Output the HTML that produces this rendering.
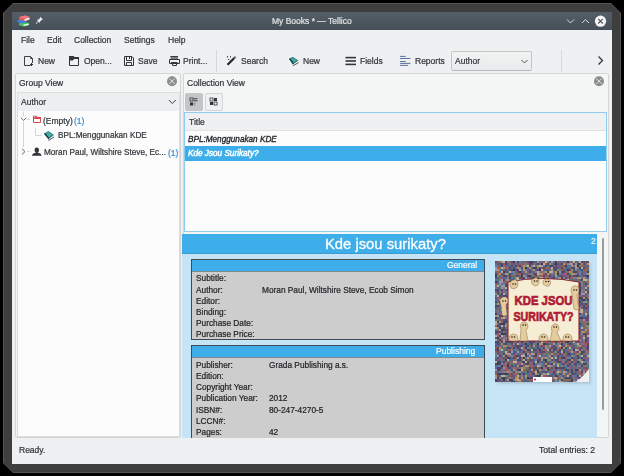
<!DOCTYPE html>
<html><head><meta charset="utf-8">
<style>
*{margin:0;padding:0;box-sizing:border-box}
html,body{width:624px;height:476px;overflow:hidden;background:#000;font-family:"Liberation Sans",sans-serif;font-size:8.5px;color:#31363b}
.a{position:absolute}
.t{position:absolute;line-height:10px;white-space:nowrap;-webkit-text-stroke:0.22px currentColor;will-change:transform}
#frame{left:3px;top:3px;width:618px;height:470px;background:#555;clip-path:polygon(10px 0,608px 0,618px 10px,618px 460px,608px 470px,10px 470px,0 460px,0 10px)}
#frame2{left:4px;top:4px;width:616px;height:468px;background:#3e3e3e;clip-path:polygon(9px 0,607px 0,616px 9px,616px 459px,607px 468px,9px 468px,0 459px,0 9px)}
#win{left:12px;top:12px;width:600px;height:452px;background:#eff0f1}
#title{left:12px;top:12px;width:600px;height:18px;background:linear-gradient(#555f68,#464f57)}
.panel{background:#f4f5f5;border:1px solid #d3d5d7;border-radius:2px}
.closeb{width:10px;height:10px;border-radius:50%;background:#8f9192}
</style></head><body>
<div class="a" id="frame"></div><div class="a" id="frame2"></div>
<div class="a" id="win"></div>
<div class="a" id="title"></div>
<div class="t" style="left:272px;top:16px;color:#dfe1e2">My Books * — Tellico</div>


<svg class="a" style="left:0;top:0" width="624" height="30">
 <!-- tellico books -->
 <path d="M19 23.2 L24.5 21.8 L29 23 L29 25.3 L24 26.4 L19 25.2 Z" fill="#43c25a"/>
 <path d="M23.5 24.6 L28.8 23.5 L28.8 25 L23.5 26.1 Z" fill="#f0f6f0"/>
 <path d="M17.6 20.2 L22.5 18.8 L26.5 20 L26.5 22.4 L22 23.3 L17.6 22.2 Z" fill="#3a82e0"/>
 <path d="M19 17 L25 15.4 L29.6 17 L29.6 19.8 L24.5 21.2 L19 19.6 Z" fill="#e55a5e"/>
 <path d="M19 17 L25 15.4 L29.6 17 L24.2 18.5 Z" fill="#ee7a7c"/>
 <path d="M24.6 19 L29.4 17.6 L29.4 19.5 L24.6 20.9 Z" fill="#f6eeee"/>
 <!-- pin -->
 <g transform="translate(39.3 20.5) rotate(45) scale(0.78)" fill="#eceeef">
  <rect x="-0.5" y="1.5" width="1" height="4.5"/>
  <path d="M-2.6 1.8 H2.6 L1.6 0 V-3 L2.4 -4.2 H-2.4 L-1.6 -3 V0 Z"/>
 </g>
 <!-- min max close -->
 <g stroke="#d8dadb" stroke-width="1" fill="none">
  <path d="M567 19.5 L570.5 23 L574 19.5"/>
  <path d="M582 23 L585.5 19.5 L589 23"/>
 </g>
 <circle cx="600.5" cy="21.2" r="5.6" fill="#f4f5f5"/>
 <path d="M598.2 18.9 L602.8 23.5 M602.8 18.9 L598.2 23.5" stroke="#4b535a" stroke-width="1.1"/>
</svg>

<!-- menu -->
<div class="t" style="left:21px;top:35px">File</div>
<div class="t" style="left:46.5px;top:35px">Edit</div>
<div class="t" style="left:73.5px;top:35px">Collection</div>
<div class="t" style="left:124px;top:35px">Settings</div>
<div class="t" style="left:168px;top:35px">Help</div>

<!-- toolbar -->
<div class="t" style="left:38px;top:56px">New</div>
<div class="t" style="left:83.5px;top:56px">Open...</div>
<div class="t" style="left:138px;top:56px">Save</div>
<div class="t" style="left:183px;top:56px">Print...</div>
<div class="a" style="left:216px;top:50px;width:1px;height:22px;background:#d6d8da"></div>
<div class="t" style="left:240.6px;top:56px">Search</div>
<div class="t" style="left:303px;top:56px">New</div>
<div class="t" style="left:360px;top:56px">Fields</div>
<div class="t" style="left:414.7px;top:56px">Reports</div>
<div class="a" style="left:451px;top:51px;width:81px;height:20px;border:1px solid #c3c5c7;border-bottom-color:#b8babc;border-radius:2px;background:linear-gradient(#f1f2f2,#eaebec)"></div>
<div class="t" style="left:455px;top:56px">Author</div>
<div class="a" style="left:561px;top:50px;width:1px;height:22px;background:#d6d8da"></div>


<!-- toolbar icons -->
<svg class="a" style="left:0;top:0" width="624" height="80">
 <g fill="none" stroke="#31363b" stroke-width="1">
  <!-- new doc -->
  <path d="M30.5 65.5 H24.5 V56.5 H30.5 L32.5 58.5 V63" stroke="#3b4045"/>
  <path d="M30.3 56.3 L32.9 58.9 H30.3 Z" fill="#31363b" stroke="none"/>
  <!-- folder -->
  <path d="M69.5 59.5 V65.5 H78.5 V58.5"/>
  <!-- floppy -->
  <path d="M124.5 56.5 H132 L133.5 58 V65.5 H124.5 Z"/>
  <path d="M126.5 56.5 V60.5 H131.5 V56.5"/>
  <path d="M126.5 65.5 V62.5 H131.5 V65.5"/>
  <!-- printer -->
  <path d="M169.5 59.5 H179.5 V63.5 H169.5 Z"/>
  <path d="M172.5 63.5 V65.5 H176.5 V63.5"/>
 </g>
 <g fill="#31363b">
  <rect x="31" y="63" width="1" height="3"/><rect x="30" y="64" width="3" height="1"/>
  <path d="M69 56 H73.6 L74.6 57 H79 V59 H74.2 L72.8 60.4 H69 Z"/>
  <rect x="129" y="57" width="1" height="2"/>
  <rect x="170.5" y="56" width="7.5" height="3" fill="#7b7f83"/><rect x="170.5" y="56" width="7.5" height="0.9"/>
  <rect x="171" y="62" width="6.5" height="1.6"/>
  <!-- fields -->
  <rect x="345.5" y="56.8" width="10.5" height="1.6"/>
  <rect x="345.5" y="60.2" width="10.5" height="1.6"/>
  <rect x="345.5" y="63.6" width="10.5" height="1.6"/>
 </g>
 <!-- wand -->
 <path d="M228.3 64 L233.6 58.7" stroke="#232629" stroke-width="2.2" stroke-linecap="square"/>
 <path d="M233.8 58.5 L235.6 56.7" stroke="#6a6e72" stroke-width="2.2"/>
 <g fill="#45494d"><rect x="227" y="56" width="1" height="1.5"/><rect x="230" y="56" width="1" height="1.5"/><rect x="228" y="59" width="1.4" height="1"/></g>
 <!-- teal book -->
 <path d="M292.6 56.8 L298.5 60.5 L293.5 64.3 L289 59 Z" fill="#2a8580"/>
 <path d="M292 57.8 L296.5 60.3 L292.8 62.8 L290.5 59.2 Z" fill="#4aa8a2"/>
 <path d="M289 58.8 L290.3 58.2 L294 63.6 L293 64.8 Z" fill="#0f3f40"/>
 <path d="M293.7 64 L298.4 61 L298.4 62.5 L293.7 65.4 Z" fill="#f2f2f2"/>
 <path d="M293.2 65.6 L298.6 62.6" stroke="#2a2e32" stroke-width="0.8"/>
 <!-- reports -->
 <g stroke="#4a6090" stroke-width="0.9" stroke-linecap="round">
  <path d="M400.5 56.4 H405.3"/><path d="M400.5 58.5 H410"/><path d="M400.5 61.5 H405.3"/><path d="M400.5 63.4 H410"/><path d="M400.5 65.4 H407.8"/>
 </g>
 <g stroke="#31363b" stroke-width="1" fill="none">
  <!-- combo chevron -->
  <path d="M521.5 60 L524.5 63 L527.5 60" stroke="#4d5257"/>
  <!-- > -->
  <path d="M598.5 56.5 L602.5 60.5 L598.5 64.5" stroke-width="1.3"/>
 </g>
</svg>

<!-- group panel -->
<div class="a panel" style="left:15px;top:73px;width:166px;height:365px"></div>
<div class="t" style="left:18.5px;top:77.7px">Group View</div>
<svg class="a" style="left:166px;top:75px" width="12" height="12"><circle cx="6" cy="6.2" r="5" fill="#8c8d8e"/><path d="M3.4 3.6 L8.6 8.8 M8.6 3.6 L3.4 8.8" stroke="#eceded" stroke-width="0.9"/></svg>
<div class="a" style="left:17px;top:92px;width:163px;height:19px;background:#edeeef;border:1px solid #dcdddd;border-bottom:none"></div>
<div class="t" style="left:21px;top:97px">Author</div>
<svg class="a" style="left:168px;top:98px" width="10" height="8"><path d="M0.8 2 L4.3 5.5 L7.8 2" stroke="#31363b" stroke-width="1" fill="none"/></svg>
<div class="a" style="left:17px;top:111px;width:163px;height:326px;background:#fcfcfc;border:1px solid #dadbdc;border-top:none"></div>
<div class="t" style="left:43px;top:115.5px">(Empty)</div><div class="t" style="left:73.8px;top:115.5px;color:#3d8fd2">(1)</div>
<div class="t" style="left:57.8px;top:130.5px;font-size:8.2px">BPL:Menggunakan KDE</div>
<div class="t" style="left:43.5px;top:147.5px;font-size:8.2px">Moran Paul, Wiltshire Steve, Ec...</div><div class="t" style="left:167.5px;top:147.5px;color:#3d8fd2">(1)</div>


<!-- tree icons -->
<svg class="a" style="left:0;top:100px" width="200" height="70">
 <g stroke="#d3d4d5" stroke-width="1" fill="none">
  <path d="M23.5 11.5 V16"/><path d="M23.5 22 V47"/>
  <path d="M27 19.5 H30"/>
  <path d="M27 51.5 H30"/>
  <path d="M35.5 28 V35.5 H42"/>
 </g>
 <g stroke="#5d6166" stroke-width="1" fill="none">
  <path d="M21 17.8 L23.6 20.5 L26.2 17.8"/>
  <path d="M22 48.8 L25 51.6 L22 54.4"/>
 </g>
 <!-- red folder -->
 <g fill="none" stroke="#da4453" stroke-width="1">
  <path d="M33.5 16.5 V22.5 H40.5 V17.5"/>
 </g>
 <path d="M33 15.8 H36.5 L37.3 17 H41 V19 H33 Z" fill="#da4453"/>
 <rect x="34" y="16.3" width="1.2" height="1" fill="#fcfcfc"/>
 <!-- book -->
 <path d="M48.3 31 L54 35 L48.8 39.3 L44 33.8 Z" fill="#2a8580"/>
 <path d="M48.2 31.8 L52.3 34.9 L48.5 37.8 L45.6 34 Z" fill="#4aa8a2"/>
 <path d="M44 33.6 L45.3 33 L49.4 38.3 L48.6 39.6 Z" fill="#0f3f40"/>
 <path d="M49 39 L53.9 35.4 L53.9 37 L49 40.4 Z" fill="#f2f2f2"/>
 <path d="M48.4 40.6 L54.1 37" stroke="#2a2e32" stroke-width="0.8"/>
 <!-- person -->
 <path d="M36.8 47.5 C35.2 47.5 34.6 48.8 34.6 50.2 C34.6 51.8 35.5 52.8 36.8 52.8 C38.1 52.8 39 51.8 39 50.2 C39 48.8 38.4 47.5 36.8 47.5 Z M32 55.8 C32 53.8 34 52.8 36.8 52.8 C39.6 52.8 41.6 53.8 41.6 55.8 Z" fill="#31363b"/>
</svg>


<!-- collection panel -->
<div class="a panel" style="left:183px;top:73px;width:426px;height:365px"></div>
<div class="t" style="left:186.5px;top:77.7px">Collection View</div>
<svg class="a" style="left:593px;top:75px" width="12" height="12"><circle cx="6" cy="6.2" r="5" fill="#8c8d8e"/><path d="M3.4 3.6 L8.6 8.8 M8.6 3.6 L3.4 8.8" stroke="#eceded" stroke-width="0.9"/></svg>
<div class="a" style="left:185px;top:93px;width:18px;height:18px;background:#c4c5c6;border-radius:2px"></div>
<div class="a" style="left:204.5px;top:92.5px;width:18px;height:18px;background:#eff0f1;border:1px solid #d3d5d7;border-radius:2px"></div>
<!-- view mode icons -->
<svg class="a" style="left:185px;top:93px" width="40" height="20">
 <g fill="#31363b">
  <rect x="5" y="5" width="3" height="3" fill="none" stroke="#31363b" stroke-width="0.8"/>
  <rect x="8.5" y="5.3" width="4" height="0.9"/><rect x="8.5" y="7.3" width="4" height="0.9"/>
  <rect x="5" y="9.5" width="3" height="3"/>
  <rect x="8.5" y="9.8" width="2" height="0.9" fill="#7a7d80"/><rect x="8.5" y="11.6" width="2" height="0.9" fill="#7a7d80"/>
  <rect x="25" y="5" width="3" height="3" fill="none" stroke="#31363b" stroke-width="0.8"/>
  <rect x="29" y="5" width="3" height="3"/>
  <rect x="25" y="9" width="3" height="3"/>
  <rect x="29" y="9" width="3" height="3" fill="none" stroke="#31363b" stroke-width="0.8"/>
 </g>
</svg>
<div class="a" style="left:184px;top:112px;width:423px;height:120px;background:#fcfcfc;border:1px solid #8fcdee"></div>
<div class="a" style="left:185px;top:113px;width:421px;height:18px;background:#eff0f1;border-bottom:1px solid #e1e2e3"></div>
<div class="t" style="left:188.5px;top:117px">Title</div>
<div class="a" style="left:185px;top:146px;width:421px;height:15px;background:#3daee9"></div>
<div class="t" style="left:187.5px;top:134.5px;font-style:italic;font-size:8.2px;color:#232629;-webkit-text-stroke:0.32px #232629">BPL:Menggunakan KDE</div>
<div class="t" style="left:187.5px;top:149px;font-style:italic;font-size:8.2px;color:#fff;-webkit-text-stroke:0.45px #fff">Kde Jsou Surikaty?</div>

<!-- detail view -->
<div class="a" style="left:182px;top:234px;width:415px;height:204px;background:#c5e5f7"></div>
<div class="a" style="left:182px;top:234px;width:415px;height:20px;background:#3daee9;border-bottom:1px solid #3a9cd2"></div>
<div class="t" style="left:324.5px;top:236px;font-size:14.8px;line-height:16px;color:#fcfcfc;-webkit-text-stroke:0.3px #fcfcfc">Kde jsou surikaty?</div>
<div class="t" style="left:590.5px;top:236px;font-size:8.8px;color:#fcfcfc;-webkit-text-stroke:0.1px #fcfcfc">2</div>


<!-- tables -->
<div class="a" style="left:191px;top:259px;width:294px;height:81px;background:#cdcdcd;border:1px solid #3e4b55"></div>
<div class="a" style="left:192px;top:260px;width:292px;height:12px;background:#3daee9;border-bottom:1px solid #7d8a92"></div>
<div class="t" style="left:446.5px;top:260px;color:#fcfcfc">General</div>
<div class="t" style="left:195.5px;top:273px;font-size:8.3px;color:#232629">Subtitle:</div>
<div class="t" style="left:195.5px;top:284.5px;font-size:8.3px;color:#232629">Author:</div>
<div class="t" style="left:262px;top:284.5px;font-size:8.3px;color:#232629">Moran Paul, Wiltshire Steve, Ecob Simon</div>
<div class="t" style="left:195.5px;top:295.5px;font-size:8.3px;color:#232629">Editor:</div>
<div class="t" style="left:195.5px;top:306.5px;font-size:8.3px;color:#232629">Binding:</div>
<div class="t" style="left:195.5px;top:317.5px;font-size:8.3px;color:#232629">Purchase Date:</div>
<div class="t" style="left:195.5px;top:328.5px;font-size:8.3px;color:#232629">Purchase Price:</div>

<div class="a" style="left:191px;top:345px;width:294px;height:93px;background:#cdcdcd;border:1px solid #3e4b55;border-bottom:none"></div>
<div class="a" style="left:192px;top:346px;width:292px;height:12px;background:#3daee9;border-bottom:1px solid #7d8a92"></div>
<div class="t" style="left:435.5px;top:346px;color:#fcfcfc">Publishing</div>
<div class="t" style="left:195.5px;top:359.5px;font-size:8.3px;color:#232629">Publisher:</div>
<div class="t" style="left:268.5px;top:359.5px;font-size:8.3px;color:#232629">Grada Publishing a.s.</div>
<div class="t" style="left:195.5px;top:370.5px;font-size:8.3px;color:#232629">Edition:</div>
<div class="t" style="left:195.5px;top:382px;font-size:8.3px;color:#232629">Copyright Year:</div>
<div class="t" style="left:195.5px;top:393px;font-size:8.3px;color:#232629">Publication Year:</div>
<div class="t" style="left:268.5px;top:393px;font-size:8.3px;color:#232629">2012</div>
<div class="t" style="left:195.5px;top:404.5px;font-size:8.3px;color:#232629">ISBN#:</div>
<div class="t" style="left:268.5px;top:404.5px;font-size:8.3px;color:#232629">80-247-4270-5</div>
<div class="t" style="left:195.5px;top:415.5px;font-size:8.3px;color:#232629">LCCN#:</div>
<div class="t" style="left:195.5px;top:426.5px;font-size:8.3px;color:#232629">Pages:</div>
<div class="t" style="left:268.5px;top:426.5px;font-size:8.3px;color:#232629">42</div>

<!-- cover -->
<div class="a" style="left:497px;top:263px;width:94px;height:121px;background:rgba(0,0,0,.12);filter:blur(1px)"></div>
<svg class="a" style="left:495px;top:261px" width="94" height="121" viewBox="0 0 94 121">
<defs><filter id="bl"><feGaussianBlur stdDeviation="0.6"/></filter></defs><rect width="94" height="121" fill="#6a6680"/>
<g shape-rendering="crispEdges" filter="url(#bl)"><path fill="#6a3f62" d="M0 0h2v2h-2zM16 0h2v2h-2zM32 0h2v2h-2zM90 0h2v2h-2zM92 0h2v2h-2zM36 2h2v2h-2zM60 4h2v2h-2zM26 6h2v2h-2zM60 6h2v2h-2zM10 8h2v2h-2zM20 8h2v2h-2zM42 8h2v2h-2zM74 8h2v2h-2zM22 10h2v2h-2zM6 12h2v2h-2zM38 12h2v2h-2zM50 12h2v2h-2zM22 14h2v2h-2zM40 14h2v2h-2zM48 14h2v2h-2zM64 14h2v2h-2zM66 14h2v2h-2zM78 14h2v2h-2zM26 16h2v2h-2zM70 16h2v2h-2zM8 18h2v2h-2zM56 18h2v2h-2zM64 18h2v2h-2zM42 20h2v2h-2zM10 22h2v2h-2zM40 22h2v2h-2zM14 24h2v2h-2zM16 24h2v2h-2zM68 24h2v2h-2zM58 26h2v2h-2zM60 26h2v2h-2zM84 26h2v2h-2zM2 28h2v2h-2zM36 28h2v2h-2zM58 28h2v2h-2zM76 28h2v2h-2zM90 28h2v2h-2zM42 30h2v2h-2zM32 32h2v2h-2zM48 32h2v2h-2zM68 32h2v2h-2zM74 32h2v2h-2zM46 34h2v2h-2zM64 34h2v2h-2zM80 36h2v2h-2zM30 38h2v2h-2zM4 40h2v2h-2zM28 40h2v2h-2zM44 40h2v2h-2zM82 40h2v2h-2zM10 42h2v2h-2zM40 44h2v2h-2zM58 44h2v2h-2zM44 46h2v2h-2zM70 46h2v2h-2zM88 46h2v2h-2zM42 50h2v2h-2zM8 52h2v2h-2zM30 52h2v2h-2zM46 52h2v2h-2zM28 54h2v2h-2zM82 54h2v2h-2zM28 56h2v2h-2zM40 56h2v2h-2zM82 56h2v2h-2zM92 56h2v2h-2zM8 58h2v2h-2zM16 58h2v2h-2zM20 58h2v2h-2zM92 58h2v2h-2zM30 60h2v2h-2zM44 60h2v2h-2zM74 60h2v2h-2zM14 62h2v2h-2zM32 64h2v2h-2zM10 68h2v2h-2zM12 68h2v2h-2zM14 68h2v2h-2zM4 70h2v2h-2zM36 70h2v2h-2zM64 70h2v2h-2zM84 70h2v2h-2zM22 72h2v2h-2zM90 72h2v2h-2zM36 74h2v2h-2zM78 74h2v2h-2zM90 74h2v2h-2zM84 76h2v2h-2zM92 76h2v2h-2zM52 78h2v2h-2zM60 78h2v2h-2zM78 78h2v2h-2zM82 78h2v2h-2zM22 80h2v2h-2zM36 80h2v2h-2zM82 80h2v2h-2zM90 80h2v2h-2zM10 82h2v2h-2zM16 82h2v2h-2zM20 82h2v2h-2zM92 82h2v2h-2zM20 84h2v2h-2zM24 84h2v2h-2zM46 84h2v2h-2zM68 84h2v2h-2zM56 86h2v2h-2zM86 86h2v2h-2zM0 88h2v2h-2zM40 88h2v2h-2zM68 88h2v2h-2zM84 88h2v2h-2zM2 90h2v2h-2zM46 90h2v2h-2zM56 90h2v2h-2zM82 90h2v2h-2zM18 92h2v2h-2zM64 92h2v2h-2zM24 94h2v2h-2zM38 94h2v2h-2zM88 94h2v2h-2zM2 96h2v2h-2zM8 96h2v2h-2zM34 98h2v2h-2zM36 98h2v2h-2zM42 98h2v2h-2zM44 98h2v2h-2zM56 98h2v2h-2zM62 98h2v2h-2zM52 102h2v2h-2zM68 102h2v2h-2zM6 106h2v2h-2zM38 106h2v2h-2zM56 106h2v2h-2zM64 106h2v2h-2zM90 106h2v2h-2zM38 108h2v2h-2zM36 110h2v2h-2zM16 112h2v2h-2zM58 112h2v2h-2zM76 112h2v2h-2zM2 114h2v2h-2zM54 114h2v2h-2zM62 114h2v2h-2zM24 116h2v2h-2zM2 118h2v2h-2zM28 120h2v2h-2zM56 120h2v2h-2z"/><path fill="#8c5a6a" d="M2 0h2v2h-2zM30 0h2v2h-2zM48 0h2v2h-2zM58 0h2v2h-2zM68 0h2v2h-2zM64 2h2v2h-2zM22 4h2v2h-2zM68 4h2v2h-2zM86 4h2v2h-2zM36 6h2v2h-2zM90 6h2v2h-2zM6 8h2v2h-2zM0 10h2v2h-2zM38 10h2v2h-2zM82 10h2v2h-2zM88 10h2v2h-2zM22 12h2v2h-2zM28 12h2v2h-2zM48 12h2v2h-2zM50 14h2v2h-2zM34 16h2v2h-2zM48 16h2v2h-2zM8 20h2v2h-2zM16 20h2v2h-2zM46 20h2v2h-2zM68 20h2v2h-2zM70 20h2v2h-2zM80 20h2v2h-2zM84 20h2v2h-2zM70 22h2v2h-2zM20 26h2v2h-2zM20 28h2v2h-2zM0 30h2v2h-2zM6 30h2v2h-2zM8 30h2v2h-2zM22 30h2v2h-2zM66 30h2v2h-2zM40 32h2v2h-2zM86 34h2v2h-2zM90 34h2v2h-2zM8 36h2v2h-2zM58 36h2v2h-2zM20 38h2v2h-2zM38 38h2v2h-2zM78 38h2v2h-2zM2 40h2v2h-2zM18 40h2v2h-2zM50 42h2v2h-2zM68 42h2v2h-2zM82 42h2v2h-2zM84 42h2v2h-2zM92 42h2v2h-2zM72 44h2v2h-2zM2 46h2v2h-2zM42 46h2v2h-2zM80 46h2v2h-2zM76 48h2v2h-2zM0 50h2v2h-2zM20 50h2v2h-2zM28 50h2v2h-2zM56 50h2v2h-2zM46 54h2v2h-2zM52 54h2v2h-2zM4 56h2v2h-2zM64 56h2v2h-2zM78 56h2v2h-2zM44 58h2v2h-2zM50 58h2v2h-2zM52 62h2v2h-2zM66 64h2v2h-2zM68 64h2v2h-2zM78 64h2v2h-2zM6 66h2v2h-2zM36 66h2v2h-2zM68 66h2v2h-2zM84 68h2v2h-2zM56 70h2v2h-2zM78 70h2v2h-2zM44 72h2v2h-2zM50 72h2v2h-2zM64 72h2v2h-2zM92 72h2v2h-2zM10 74h2v2h-2zM50 74h2v2h-2zM60 76h2v2h-2zM64 76h2v2h-2zM76 76h2v2h-2zM78 76h2v2h-2zM86 76h2v2h-2zM2 78h2v2h-2zM6 78h2v2h-2zM42 80h2v2h-2zM52 80h2v2h-2zM86 80h2v2h-2zM56 82h2v2h-2zM72 82h2v2h-2zM84 82h2v2h-2zM4 84h2v2h-2zM16 84h2v2h-2zM76 84h2v2h-2zM82 86h2v2h-2zM12 88h2v2h-2zM88 88h2v2h-2zM4 90h2v2h-2zM42 90h2v2h-2zM54 90h2v2h-2zM80 90h2v2h-2zM80 94h2v2h-2zM10 96h2v2h-2zM20 96h2v2h-2zM70 96h2v2h-2zM52 100h2v2h-2zM72 100h2v2h-2zM28 102h2v2h-2zM40 104h2v2h-2zM88 106h2v2h-2zM8 108h2v2h-2zM0 110h2v2h-2zM86 112h2v2h-2zM14 114h2v2h-2zM32 114h2v2h-2zM50 114h2v2h-2zM86 114h2v2h-2zM44 116h2v2h-2zM90 116h2v2h-2zM26 118h2v2h-2zM34 118h2v2h-2zM44 118h2v2h-2zM4 120h2v2h-2zM20 120h2v2h-2zM26 120h2v2h-2zM54 120h2v2h-2z"/><path fill="#946a4c" d="M4 0h2v2h-2zM14 0h2v2h-2zM28 0h2v2h-2zM62 0h2v2h-2zM76 0h2v2h-2zM82 0h2v2h-2zM14 2h2v2h-2zM26 4h2v2h-2zM66 4h2v2h-2zM88 4h2v2h-2zM2 6h2v2h-2zM4 6h2v2h-2zM64 6h2v2h-2zM74 6h2v2h-2zM92 6h2v2h-2zM36 8h2v2h-2zM88 8h2v2h-2zM58 10h2v2h-2zM70 10h2v2h-2zM90 10h2v2h-2zM20 12h2v2h-2zM54 12h2v2h-2zM12 14h2v2h-2zM16 14h2v2h-2zM24 14h2v2h-2zM44 14h2v2h-2zM52 14h2v2h-2zM72 14h2v2h-2zM10 20h2v2h-2zM90 20h2v2h-2zM18 22h2v2h-2zM26 22h2v2h-2zM44 22h2v2h-2zM58 22h2v2h-2zM0 24h2v2h-2zM36 24h2v2h-2zM48 24h2v2h-2zM60 24h2v2h-2zM70 24h2v2h-2zM16 26h2v2h-2zM36 26h2v2h-2zM16 28h2v2h-2zM30 28h2v2h-2zM12 30h2v2h-2zM30 30h2v2h-2zM88 30h2v2h-2zM12 32h2v2h-2zM62 32h2v2h-2zM92 32h2v2h-2zM30 34h2v2h-2zM2 36h2v2h-2zM22 36h2v2h-2zM60 36h2v2h-2zM10 38h2v2h-2zM18 38h2v2h-2zM36 38h2v2h-2zM48 38h2v2h-2zM78 40h2v2h-2zM4 42h2v2h-2zM14 42h2v2h-2zM20 42h2v2h-2zM46 42h2v2h-2zM48 42h2v2h-2zM22 44h2v2h-2zM28 44h2v2h-2zM30 44h2v2h-2zM42 44h2v2h-2zM64 44h2v2h-2zM18 46h2v2h-2zM20 46h2v2h-2zM76 46h2v2h-2zM2 48h2v2h-2zM34 48h2v2h-2zM14 50h2v2h-2zM16 50h2v2h-2zM72 50h2v2h-2zM88 50h2v2h-2zM8 54h2v2h-2zM24 54h2v2h-2zM34 54h2v2h-2zM58 54h2v2h-2zM78 54h2v2h-2zM26 56h2v2h-2zM2 58h2v2h-2zM26 58h2v2h-2zM6 60h2v2h-2zM76 60h2v2h-2zM82 60h2v2h-2zM86 60h2v2h-2zM92 60h2v2h-2zM46 62h2v2h-2zM48 62h2v2h-2zM82 62h2v2h-2zM88 62h2v2h-2zM90 62h2v2h-2zM12 64h2v2h-2zM14 64h2v2h-2zM36 64h2v2h-2zM72 64h2v2h-2zM24 66h2v2h-2zM88 66h2v2h-2zM90 66h2v2h-2zM26 68h2v2h-2zM28 68h2v2h-2zM52 68h2v2h-2zM64 68h2v2h-2zM8 70h2v2h-2zM12 70h2v2h-2zM40 70h2v2h-2zM82 70h2v2h-2zM90 70h2v2h-2zM58 72h2v2h-2zM78 72h2v2h-2zM22 74h2v2h-2zM84 74h2v2h-2zM44 76h2v2h-2zM72 76h2v2h-2zM34 78h2v2h-2zM74 78h2v2h-2zM4 80h2v2h-2zM30 80h2v2h-2zM48 80h2v2h-2zM64 80h2v2h-2zM34 84h2v2h-2zM52 84h2v2h-2zM60 84h2v2h-2zM72 84h2v2h-2zM74 84h2v2h-2zM28 86h2v2h-2zM80 86h2v2h-2zM0 90h2v2h-2zM12 90h2v2h-2zM30 90h2v2h-2zM32 90h2v2h-2zM50 90h2v2h-2zM92 90h2v2h-2zM6 92h2v2h-2zM58 92h2v2h-2zM68 92h2v2h-2zM70 92h2v2h-2zM12 94h2v2h-2zM48 94h2v2h-2zM68 94h2v2h-2zM26 96h2v2h-2zM42 96h2v2h-2zM54 96h2v2h-2zM64 96h2v2h-2zM90 96h2v2h-2zM26 98h2v2h-2zM32 98h2v2h-2zM14 100h2v2h-2zM24 100h2v2h-2zM58 100h2v2h-2zM74 100h2v2h-2zM14 102h2v2h-2zM18 102h2v2h-2zM36 102h2v2h-2zM86 102h2v2h-2zM10 104h2v2h-2zM28 104h2v2h-2zM34 104h2v2h-2zM88 104h2v2h-2zM16 106h2v2h-2zM30 106h2v2h-2zM32 106h2v2h-2zM42 106h2v2h-2zM54 106h2v2h-2zM38 110h2v2h-2zM82 110h2v2h-2zM0 112h2v2h-2zM20 114h2v2h-2zM24 114h2v2h-2zM12 116h2v2h-2zM78 116h2v2h-2zM6 118h2v2h-2zM10 118h2v2h-2zM32 118h2v2h-2zM46 118h2v2h-2zM54 118h2v2h-2zM68 118h2v2h-2zM70 118h2v2h-2zM72 118h2v2h-2zM74 118h2v2h-2zM14 120h2v2h-2zM38 120h2v2h-2z"/><path fill="#c9a058" d="M6 0h2v2h-2zM42 0h2v2h-2zM54 2h2v2h-2zM68 2h2v2h-2zM86 2h2v2h-2zM92 2h2v2h-2zM28 4h2v2h-2zM42 4h2v2h-2zM76 4h2v2h-2zM80 4h2v2h-2zM8 6h2v2h-2zM22 6h2v2h-2zM28 6h2v2h-2zM34 6h2v2h-2zM2 8h2v2h-2zM28 8h2v2h-2zM56 8h2v2h-2zM30 10h2v2h-2zM50 10h2v2h-2zM60 10h2v2h-2zM74 10h2v2h-2zM4 12h2v2h-2zM44 12h2v2h-2zM46 12h2v2h-2zM52 12h2v2h-2zM60 12h2v2h-2zM76 12h2v2h-2zM78 12h2v2h-2zM92 12h2v2h-2zM20 16h2v2h-2zM40 16h2v2h-2zM44 16h2v2h-2zM64 16h2v2h-2zM82 16h2v2h-2zM88 16h2v2h-2zM12 18h2v2h-2zM36 18h2v2h-2zM38 22h2v2h-2zM52 22h2v2h-2zM54 22h2v2h-2zM92 24h2v2h-2zM34 26h2v2h-2zM56 28h2v2h-2zM60 28h2v2h-2zM26 30h2v2h-2zM44 30h2v2h-2zM36 32h2v2h-2zM44 32h2v2h-2zM52 32h2v2h-2zM66 32h2v2h-2zM80 32h2v2h-2zM32 34h2v2h-2zM70 34h2v2h-2zM18 36h2v2h-2zM24 36h2v2h-2zM88 36h2v2h-2zM4 38h2v2h-2zM70 38h2v2h-2zM90 40h2v2h-2zM12 44h2v2h-2zM36 46h2v2h-2zM56 46h2v2h-2zM60 46h2v2h-2zM62 46h2v2h-2zM12 48h2v2h-2zM84 48h2v2h-2zM12 50h2v2h-2zM22 50h2v2h-2zM24 50h2v2h-2zM48 50h2v2h-2zM0 54h2v2h-2zM26 54h2v2h-2zM68 54h2v2h-2zM6 56h2v2h-2zM62 56h2v2h-2zM58 58h2v2h-2zM4 60h2v2h-2zM68 60h2v2h-2zM72 60h2v2h-2zM22 62h2v2h-2zM36 62h2v2h-2zM68 62h2v2h-2zM80 62h2v2h-2zM10 64h2v2h-2zM20 64h2v2h-2zM50 64h2v2h-2zM12 66h2v2h-2zM28 66h2v2h-2zM58 68h2v2h-2zM74 68h2v2h-2zM90 68h2v2h-2zM62 70h2v2h-2zM86 70h2v2h-2zM88 70h2v2h-2zM26 72h2v2h-2zM30 72h2v2h-2zM20 74h2v2h-2zM44 74h2v2h-2zM12 76h2v2h-2zM22 76h2v2h-2zM50 76h2v2h-2zM56 76h2v2h-2zM58 76h2v2h-2zM36 78h2v2h-2zM6 82h2v2h-2zM46 82h2v2h-2zM8 84h2v2h-2zM38 84h2v2h-2zM70 84h2v2h-2zM84 84h2v2h-2zM4 86h2v2h-2zM68 86h2v2h-2zM84 90h2v2h-2zM10 92h2v2h-2zM38 92h2v2h-2zM56 92h2v2h-2zM8 94h2v2h-2zM54 94h2v2h-2zM32 96h2v2h-2zM46 96h2v2h-2zM76 98h2v2h-2zM84 98h2v2h-2zM50 102h2v2h-2zM62 102h2v2h-2zM22 104h2v2h-2zM32 104h2v2h-2zM52 104h2v2h-2zM26 106h2v2h-2zM36 108h2v2h-2zM44 108h2v2h-2zM50 108h2v2h-2zM12 110h2v2h-2zM64 110h2v2h-2zM40 112h2v2h-2zM68 112h2v2h-2zM88 112h2v2h-2zM0 114h2v2h-2zM30 114h2v2h-2zM20 116h2v2h-2zM22 116h2v2h-2zM26 116h2v2h-2zM58 116h2v2h-2zM66 116h2v2h-2zM20 118h2v2h-2zM24 118h2v2h-2zM24 120h2v2h-2zM50 120h2v2h-2z"/><path fill="#d0c2b4" d="M8 0h2v2h-2zM84 0h2v2h-2zM38 4h2v2h-2zM6 6h2v2h-2zM56 6h2v2h-2zM24 8h2v2h-2zM46 8h2v2h-2zM42 10h2v2h-2zM54 10h2v2h-2zM56 10h2v2h-2zM42 12h2v2h-2zM52 20h2v2h-2zM76 20h2v2h-2zM2 24h2v2h-2zM10 26h2v2h-2zM26 26h2v2h-2zM90 26h2v2h-2zM20 30h2v2h-2zM80 30h2v2h-2zM8 32h2v2h-2zM54 32h2v2h-2zM72 32h2v2h-2zM46 36h2v2h-2zM82 38h2v2h-2zM12 40h2v2h-2zM60 40h2v2h-2zM74 42h2v2h-2zM6 44h2v2h-2zM60 44h2v2h-2zM76 44h2v2h-2zM78 44h2v2h-2zM6 48h2v2h-2zM18 50h2v2h-2zM26 50h2v2h-2zM84 50h2v2h-2zM86 50h2v2h-2zM12 52h2v2h-2zM68 52h2v2h-2zM90 52h2v2h-2zM72 54h2v2h-2zM8 56h2v2h-2zM76 56h2v2h-2zM80 56h2v2h-2zM0 60h2v2h-2zM48 60h2v2h-2zM0 62h2v2h-2zM6 64h2v2h-2zM38 64h2v2h-2zM16 66h2v2h-2zM30 66h2v2h-2zM56 66h2v2h-2zM32 68h2v2h-2zM72 70h2v2h-2zM0 74h2v2h-2zM6 74h2v2h-2zM68 76h2v2h-2zM0 78h2v2h-2zM82 82h2v2h-2zM26 86h2v2h-2zM52 88h2v2h-2zM80 88h2v2h-2zM66 90h2v2h-2zM26 94h2v2h-2zM28 94h2v2h-2zM44 94h2v2h-2zM56 96h2v2h-2zM60 96h2v2h-2zM12 98h2v2h-2zM28 98h2v2h-2zM86 100h2v2h-2zM42 104h2v2h-2zM62 110h2v2h-2zM92 112h2v2h-2zM22 114h2v2h-2zM60 116h2v2h-2zM22 118h2v2h-2zM64 120h2v2h-2z"/><path fill="#47434f" d="M10 0h2v2h-2zM34 2h2v2h-2zM42 2h2v2h-2zM82 2h2v2h-2zM84 2h2v2h-2zM6 4h2v2h-2zM16 4h2v2h-2zM56 4h2v2h-2zM40 6h2v2h-2zM48 6h2v2h-2zM66 6h2v2h-2zM86 8h2v2h-2zM62 10h2v2h-2zM66 10h2v2h-2zM78 10h2v2h-2zM80 10h2v2h-2zM92 10h2v2h-2zM0 12h2v2h-2zM26 12h2v2h-2zM40 12h2v2h-2zM72 12h2v2h-2zM8 14h2v2h-2zM14 14h2v2h-2zM32 14h2v2h-2zM74 14h2v2h-2zM80 14h2v2h-2zM24 16h2v2h-2zM36 16h2v2h-2zM58 16h2v2h-2zM42 18h2v2h-2zM86 18h2v2h-2zM40 20h2v2h-2zM36 22h2v2h-2zM56 22h2v2h-2zM76 22h2v2h-2zM84 22h2v2h-2zM10 24h2v2h-2zM12 24h2v2h-2zM32 24h2v2h-2zM58 24h2v2h-2zM84 24h2v2h-2zM30 26h2v2h-2zM44 26h2v2h-2zM66 26h2v2h-2zM74 26h2v2h-2zM12 28h2v2h-2zM48 28h2v2h-2zM68 28h2v2h-2zM78 28h2v2h-2zM38 30h2v2h-2zM50 30h2v2h-2zM6 32h2v2h-2zM20 32h2v2h-2zM30 32h2v2h-2zM50 32h2v2h-2zM28 34h2v2h-2zM6 36h2v2h-2zM30 36h2v2h-2zM34 36h2v2h-2zM48 36h2v2h-2zM56 36h2v2h-2zM68 36h2v2h-2zM76 36h2v2h-2zM86 36h2v2h-2zM90 36h2v2h-2zM12 38h2v2h-2zM24 38h2v2h-2zM50 38h2v2h-2zM74 38h2v2h-2zM0 40h2v2h-2zM40 40h2v2h-2zM24 42h2v2h-2zM70 42h2v2h-2zM80 42h2v2h-2zM90 42h2v2h-2zM2 44h2v2h-2zM56 44h2v2h-2zM68 44h2v2h-2zM6 46h2v2h-2zM90 46h2v2h-2zM36 48h2v2h-2zM62 48h2v2h-2zM80 48h2v2h-2zM32 50h2v2h-2zM74 50h2v2h-2zM0 52h2v2h-2zM18 52h2v2h-2zM42 52h2v2h-2zM60 52h2v2h-2zM62 52h2v2h-2zM78 52h2v2h-2zM82 52h2v2h-2zM6 54h2v2h-2zM36 54h2v2h-2zM50 54h2v2h-2zM62 54h2v2h-2zM70 54h2v2h-2zM18 56h2v2h-2zM38 56h2v2h-2zM52 56h2v2h-2zM58 56h2v2h-2zM60 56h2v2h-2zM2 60h2v2h-2zM42 60h2v2h-2zM60 60h2v2h-2zM4 62h2v2h-2zM44 62h2v2h-2zM72 62h2v2h-2zM92 62h2v2h-2zM34 64h2v2h-2zM70 64h2v2h-2zM74 66h2v2h-2zM8 68h2v2h-2zM2 70h2v2h-2zM20 70h2v2h-2zM10 72h2v2h-2zM68 72h2v2h-2zM70 72h2v2h-2zM88 72h2v2h-2zM14 74h2v2h-2zM52 74h2v2h-2zM74 74h2v2h-2zM4 78h2v2h-2zM48 78h2v2h-2zM56 78h2v2h-2zM90 78h2v2h-2zM0 80h2v2h-2zM6 80h2v2h-2zM16 80h2v2h-2zM38 80h2v2h-2zM70 80h2v2h-2zM36 82h2v2h-2zM74 82h2v2h-2zM22 84h2v2h-2zM32 84h2v2h-2zM2 86h2v2h-2zM60 86h2v2h-2zM2 88h2v2h-2zM38 88h2v2h-2zM54 88h2v2h-2zM14 90h2v2h-2zM28 90h2v2h-2zM62 90h2v2h-2zM68 90h2v2h-2zM86 90h2v2h-2zM86 92h2v2h-2zM4 94h2v2h-2zM20 94h2v2h-2zM22 94h2v2h-2zM82 94h2v2h-2zM18 96h2v2h-2zM62 96h2v2h-2zM30 98h2v2h-2zM48 98h2v2h-2zM74 98h2v2h-2zM32 100h2v2h-2zM62 100h2v2h-2zM64 100h2v2h-2zM70 100h2v2h-2zM0 102h2v2h-2zM4 102h2v2h-2zM12 102h2v2h-2zM30 102h2v2h-2zM32 102h2v2h-2zM56 102h2v2h-2zM80 102h2v2h-2zM90 102h2v2h-2zM4 106h2v2h-2zM40 106h2v2h-2zM62 106h2v2h-2zM4 108h2v2h-2zM52 108h2v2h-2zM72 108h2v2h-2zM76 108h2v2h-2zM32 110h2v2h-2zM2 112h2v2h-2zM24 112h2v2h-2zM38 112h2v2h-2zM44 112h2v2h-2zM44 114h2v2h-2zM82 114h2v2h-2zM88 114h2v2h-2zM2 116h2v2h-2zM74 116h2v2h-2zM84 116h2v2h-2zM84 118h2v2h-2zM2 120h2v2h-2zM36 120h2v2h-2zM74 120h2v2h-2z"/><path fill="#6480b8" d="M12 0h2v2h-2zM24 0h2v2h-2zM72 2h2v2h-2zM0 4h2v2h-2zM48 4h2v2h-2zM72 4h2v2h-2zM4 8h2v2h-2zM30 8h2v2h-2zM16 10h2v2h-2zM84 10h2v2h-2zM34 12h2v2h-2zM56 12h2v2h-2zM64 12h2v2h-2zM90 12h2v2h-2zM60 16h2v2h-2zM90 16h2v2h-2zM4 18h2v2h-2zM38 18h2v2h-2zM56 20h2v2h-2zM60 22h2v2h-2zM24 24h2v2h-2zM46 24h2v2h-2zM54 24h2v2h-2zM22 26h2v2h-2zM52 26h2v2h-2zM62 26h2v2h-2zM10 30h2v2h-2zM24 32h2v2h-2zM38 32h2v2h-2zM64 32h2v2h-2zM92 34h2v2h-2zM62 38h2v2h-2zM64 38h2v2h-2zM20 40h2v2h-2zM30 42h2v2h-2zM52 42h2v2h-2zM54 44h2v2h-2zM34 46h2v2h-2zM72 46h2v2h-2zM56 48h2v2h-2zM2 50h2v2h-2zM30 50h2v2h-2zM34 50h2v2h-2zM54 50h2v2h-2zM34 52h2v2h-2zM70 52h2v2h-2zM74 54h2v2h-2zM50 56h2v2h-2zM18 58h2v2h-2zM16 60h2v2h-2zM46 60h2v2h-2zM52 60h2v2h-2zM90 60h2v2h-2zM26 62h2v2h-2zM22 66h2v2h-2zM72 66h2v2h-2zM36 68h2v2h-2zM38 68h2v2h-2zM50 68h2v2h-2zM70 68h2v2h-2zM42 70h2v2h-2zM8 76h2v2h-2zM14 76h2v2h-2zM62 76h2v2h-2zM80 76h2v2h-2zM20 78h2v2h-2zM50 78h2v2h-2zM32 80h2v2h-2zM40 80h2v2h-2zM86 82h2v2h-2zM28 84h2v2h-2zM20 88h2v2h-2zM20 92h2v2h-2zM92 92h2v2h-2zM0 94h2v2h-2zM52 94h2v2h-2zM84 94h2v2h-2zM74 96h2v2h-2zM40 98h2v2h-2zM68 100h2v2h-2zM88 100h2v2h-2zM92 100h2v2h-2zM10 102h2v2h-2zM42 102h2v2h-2zM46 102h2v2h-2zM64 102h2v2h-2zM2 104h2v2h-2zM4 104h2v2h-2zM70 104h2v2h-2zM82 104h2v2h-2zM14 108h2v2h-2zM62 108h2v2h-2zM4 110h2v2h-2zM54 112h2v2h-2zM78 114h2v2h-2zM18 118h2v2h-2zM50 118h2v2h-2zM34 120h2v2h-2zM62 120h2v2h-2z"/><path fill="#2c3048" d="M18 0h2v2h-2zM36 0h2v2h-2zM72 0h2v2h-2zM46 2h2v2h-2zM60 2h2v2h-2zM70 4h2v2h-2zM82 4h2v2h-2zM30 6h2v2h-2zM38 6h2v2h-2zM84 6h2v2h-2zM18 8h2v2h-2zM44 8h2v2h-2zM72 8h2v2h-2zM8 10h2v2h-2zM24 10h2v2h-2zM62 12h2v2h-2zM0 14h2v2h-2zM26 14h2v2h-2zM34 14h2v2h-2zM92 14h2v2h-2zM38 16h2v2h-2zM40 18h2v2h-2zM54 18h2v2h-2zM68 18h2v2h-2zM0 20h2v2h-2zM28 20h2v2h-2zM72 20h2v2h-2zM20 22h2v2h-2zM78 22h2v2h-2zM22 24h2v2h-2zM40 24h2v2h-2zM74 24h2v2h-2zM68 26h2v2h-2zM76 26h2v2h-2zM62 28h2v2h-2zM84 28h2v2h-2zM18 32h2v2h-2zM46 32h2v2h-2zM24 34h2v2h-2zM44 34h2v2h-2zM48 34h2v2h-2zM14 36h2v2h-2zM20 36h2v2h-2zM84 36h2v2h-2zM80 38h2v2h-2zM88 38h2v2h-2zM56 40h2v2h-2zM68 40h2v2h-2zM18 42h2v2h-2zM28 42h2v2h-2zM36 44h2v2h-2zM18 48h2v2h-2zM38 48h2v2h-2zM72 48h2v2h-2zM36 50h2v2h-2zM78 50h2v2h-2zM80 50h2v2h-2zM74 52h2v2h-2zM76 52h2v2h-2zM42 54h2v2h-2zM48 54h2v2h-2zM66 54h2v2h-2zM76 54h2v2h-2zM0 56h2v2h-2zM32 56h2v2h-2zM36 56h2v2h-2zM86 56h2v2h-2zM42 58h2v2h-2zM34 60h2v2h-2zM36 60h2v2h-2zM40 60h2v2h-2zM6 62h2v2h-2zM8 62h2v2h-2zM42 62h2v2h-2zM18 64h2v2h-2zM28 64h2v2h-2zM4 66h2v2h-2zM6 68h2v2h-2zM42 68h2v2h-2zM44 68h2v2h-2zM56 68h2v2h-2zM26 70h2v2h-2zM60 70h2v2h-2zM6 72h2v2h-2zM8 72h2v2h-2zM32 72h2v2h-2zM40 74h2v2h-2zM42 74h2v2h-2zM56 74h2v2h-2zM72 74h2v2h-2zM2 76h2v2h-2zM16 78h2v2h-2zM18 78h2v2h-2zM32 78h2v2h-2zM26 80h2v2h-2zM72 80h2v2h-2zM30 82h2v2h-2zM42 82h2v2h-2zM48 82h2v2h-2zM66 82h2v2h-2zM30 86h2v2h-2zM66 86h2v2h-2zM32 88h2v2h-2zM44 88h2v2h-2zM78 88h2v2h-2zM30 92h2v2h-2zM10 94h2v2h-2zM12 96h2v2h-2zM28 96h2v2h-2zM68 96h2v2h-2zM10 98h2v2h-2zM50 98h2v2h-2zM28 100h2v2h-2zM42 100h2v2h-2zM82 100h2v2h-2zM2 102h2v2h-2zM6 104h2v2h-2zM12 104h2v2h-2zM50 104h2v2h-2zM46 106h2v2h-2zM60 106h2v2h-2zM24 108h2v2h-2zM80 108h2v2h-2zM42 110h2v2h-2zM4 112h2v2h-2zM10 112h2v2h-2zM90 112h2v2h-2zM42 114h2v2h-2zM60 114h2v2h-2zM8 116h2v2h-2zM32 116h2v2h-2zM54 116h2v2h-2zM92 116h2v2h-2zM8 118h2v2h-2zM14 118h2v2h-2zM16 118h2v2h-2zM76 118h2v2h-2zM18 120h2v2h-2zM86 120h2v2h-2z"/><path fill="#86848e" d="M20 0h2v2h-2zM52 0h2v2h-2zM30 2h2v2h-2zM36 4h2v2h-2zM78 4h2v2h-2zM84 4h2v2h-2zM24 6h2v2h-2zM42 6h2v2h-2zM82 6h2v2h-2zM80 8h2v2h-2zM18 10h2v2h-2zM40 10h2v2h-2zM44 10h2v2h-2zM48 10h2v2h-2zM76 10h2v2h-2zM18 12h2v2h-2zM36 12h2v2h-2zM80 12h2v2h-2zM84 12h2v2h-2zM30 14h2v2h-2zM42 14h2v2h-2zM12 16h2v2h-2zM62 16h2v2h-2zM68 16h2v2h-2zM78 16h2v2h-2zM80 16h2v2h-2zM10 18h2v2h-2zM58 18h2v2h-2zM64 20h2v2h-2zM66 20h2v2h-2zM8 22h2v2h-2zM34 22h2v2h-2zM46 22h2v2h-2zM72 22h2v2h-2zM86 22h2v2h-2zM86 24h2v2h-2zM0 26h2v2h-2zM8 26h2v2h-2zM8 28h2v2h-2zM80 28h2v2h-2zM86 28h2v2h-2zM88 28h2v2h-2zM4 30h2v2h-2zM16 30h2v2h-2zM60 30h2v2h-2zM82 30h2v2h-2zM86 30h2v2h-2zM82 32h2v2h-2zM84 34h2v2h-2zM60 38h2v2h-2zM66 38h2v2h-2zM42 40h2v2h-2zM50 40h2v2h-2zM66 40h2v2h-2zM88 40h2v2h-2zM8 42h2v2h-2zM34 42h2v2h-2zM62 42h2v2h-2zM32 44h2v2h-2zM82 44h2v2h-2zM16 46h2v2h-2zM22 46h2v2h-2zM50 46h2v2h-2zM82 46h2v2h-2zM42 48h2v2h-2zM8 50h2v2h-2zM10 50h2v2h-2zM6 52h2v2h-2zM24 52h2v2h-2zM50 52h2v2h-2zM54 52h2v2h-2zM58 52h2v2h-2zM80 52h2v2h-2zM86 52h2v2h-2zM10 54h2v2h-2zM84 54h2v2h-2zM90 54h2v2h-2zM10 56h2v2h-2zM30 56h2v2h-2zM56 56h2v2h-2zM24 58h2v2h-2zM38 58h2v2h-2zM74 58h2v2h-2zM18 60h2v2h-2zM10 62h2v2h-2zM56 62h2v2h-2zM56 64h2v2h-2zM82 64h2v2h-2zM90 64h2v2h-2zM38 66h2v2h-2zM46 66h2v2h-2zM64 66h2v2h-2zM78 66h2v2h-2zM92 66h2v2h-2zM4 72h2v2h-2zM12 72h2v2h-2zM36 72h2v2h-2zM54 72h2v2h-2zM86 72h2v2h-2zM8 74h2v2h-2zM26 74h2v2h-2zM48 74h2v2h-2zM88 74h2v2h-2zM4 76h2v2h-2zM10 76h2v2h-2zM38 78h2v2h-2zM76 78h2v2h-2zM88 78h2v2h-2zM24 80h2v2h-2zM28 80h2v2h-2zM68 80h2v2h-2zM18 82h2v2h-2zM38 82h2v2h-2zM62 82h2v2h-2zM64 82h2v2h-2zM70 82h2v2h-2zM80 82h2v2h-2zM14 84h2v2h-2zM62 84h2v2h-2zM32 86h2v2h-2zM52 86h2v2h-2zM62 86h2v2h-2zM88 86h2v2h-2zM4 88h2v2h-2zM16 88h2v2h-2zM30 88h2v2h-2zM56 88h2v2h-2zM76 88h2v2h-2zM86 88h2v2h-2zM90 90h2v2h-2zM0 92h2v2h-2zM28 92h2v2h-2zM48 92h2v2h-2zM14 94h2v2h-2zM16 94h2v2h-2zM42 94h2v2h-2zM60 94h2v2h-2zM78 94h2v2h-2zM30 96h2v2h-2zM48 96h2v2h-2zM52 96h2v2h-2zM72 96h2v2h-2zM20 98h2v2h-2zM68 98h2v2h-2zM82 98h2v2h-2zM56 100h2v2h-2zM6 102h2v2h-2zM44 102h2v2h-2zM76 102h2v2h-2zM92 102h2v2h-2zM56 104h2v2h-2zM66 104h2v2h-2zM84 104h2v2h-2zM90 104h2v2h-2zM48 106h2v2h-2zM72 106h2v2h-2zM6 108h2v2h-2zM8 110h2v2h-2zM10 110h2v2h-2zM14 110h2v2h-2zM16 110h2v2h-2zM22 110h2v2h-2zM42 112h2v2h-2zM46 112h2v2h-2zM26 114h2v2h-2zM64 114h2v2h-2zM4 116h2v2h-2zM14 116h2v2h-2zM48 116h2v2h-2zM78 118h2v2h-2zM46 120h2v2h-2z"/><path fill="#3a3f6e" d="M22 0h2v2h-2zM34 0h2v2h-2zM60 0h2v2h-2zM86 0h2v2h-2zM6 2h2v2h-2zM10 2h2v2h-2zM52 2h2v2h-2zM66 2h2v2h-2zM78 2h2v2h-2zM88 2h2v2h-2zM20 4h2v2h-2zM24 4h2v2h-2zM34 4h2v2h-2zM50 4h2v2h-2zM54 4h2v2h-2zM14 6h2v2h-2zM18 6h2v2h-2zM44 6h2v2h-2zM58 6h2v2h-2zM76 6h2v2h-2zM78 6h2v2h-2zM88 6h2v2h-2zM16 8h2v2h-2zM22 8h2v2h-2zM60 8h2v2h-2zM34 10h2v2h-2zM52 10h2v2h-2zM68 10h2v2h-2zM14 12h2v2h-2zM10 14h2v2h-2zM54 14h2v2h-2zM82 14h2v2h-2zM90 14h2v2h-2zM14 16h2v2h-2zM28 16h2v2h-2zM42 16h2v2h-2zM66 16h2v2h-2zM34 18h2v2h-2zM44 18h2v2h-2zM20 20h2v2h-2zM36 20h2v2h-2zM50 20h2v2h-2zM60 20h2v2h-2zM78 20h2v2h-2zM24 22h2v2h-2zM48 22h2v2h-2zM66 22h2v2h-2zM68 22h2v2h-2zM90 22h2v2h-2zM50 24h2v2h-2zM56 24h2v2h-2zM12 26h2v2h-2zM14 26h2v2h-2zM24 26h2v2h-2zM28 26h2v2h-2zM32 26h2v2h-2zM40 26h2v2h-2zM48 26h2v2h-2zM0 28h2v2h-2zM6 28h2v2h-2zM18 28h2v2h-2zM22 28h2v2h-2zM40 28h2v2h-2zM44 28h2v2h-2zM64 28h2v2h-2zM2 30h2v2h-2zM40 30h2v2h-2zM46 30h2v2h-2zM52 30h2v2h-2zM54 30h2v2h-2zM84 30h2v2h-2zM92 30h2v2h-2zM16 32h2v2h-2zM84 32h2v2h-2zM4 34h2v2h-2zM8 34h2v2h-2zM10 34h2v2h-2zM18 34h2v2h-2zM34 34h2v2h-2zM68 34h2v2h-2zM10 36h2v2h-2zM16 36h2v2h-2zM28 36h2v2h-2zM32 36h2v2h-2zM64 36h2v2h-2zM70 36h2v2h-2zM78 36h2v2h-2zM8 38h2v2h-2zM28 38h2v2h-2zM40 38h2v2h-2zM44 38h2v2h-2zM56 38h2v2h-2zM58 38h2v2h-2zM76 38h2v2h-2zM86 38h2v2h-2zM92 38h2v2h-2zM6 40h2v2h-2zM14 40h2v2h-2zM16 40h2v2h-2zM30 40h2v2h-2zM34 40h2v2h-2zM54 40h2v2h-2zM64 40h2v2h-2zM74 40h2v2h-2zM84 40h2v2h-2zM16 42h2v2h-2zM44 42h2v2h-2zM64 42h2v2h-2zM72 42h2v2h-2zM86 42h2v2h-2zM0 44h2v2h-2zM18 44h2v2h-2zM34 44h2v2h-2zM48 44h2v2h-2zM62 44h2v2h-2zM66 44h2v2h-2zM88 44h2v2h-2zM12 46h2v2h-2zM14 46h2v2h-2zM24 46h2v2h-2zM26 46h2v2h-2zM30 46h2v2h-2zM46 46h2v2h-2zM64 46h2v2h-2zM32 48h2v2h-2zM50 48h2v2h-2zM64 48h2v2h-2zM68 48h2v2h-2zM70 48h2v2h-2zM40 50h2v2h-2zM62 50h2v2h-2zM10 52h2v2h-2zM20 52h2v2h-2zM38 52h2v2h-2zM44 52h2v2h-2zM84 52h2v2h-2zM4 54h2v2h-2zM18 54h2v2h-2zM20 54h2v2h-2zM22 54h2v2h-2zM44 54h2v2h-2zM54 54h2v2h-2zM56 54h2v2h-2zM60 54h2v2h-2zM92 54h2v2h-2zM16 56h2v2h-2zM84 56h2v2h-2zM90 56h2v2h-2zM10 58h2v2h-2zM52 58h2v2h-2zM64 58h2v2h-2zM8 60h2v2h-2zM10 60h2v2h-2zM20 60h2v2h-2zM56 60h2v2h-2zM66 60h2v2h-2zM28 62h2v2h-2zM50 62h2v2h-2zM62 62h2v2h-2zM74 62h2v2h-2zM84 62h2v2h-2zM2 64h2v2h-2zM40 64h2v2h-2zM54 64h2v2h-2zM60 64h2v2h-2zM74 64h2v2h-2zM8 66h2v2h-2zM18 66h2v2h-2zM20 66h2v2h-2zM32 66h2v2h-2zM34 66h2v2h-2zM48 66h2v2h-2zM50 66h2v2h-2zM60 66h2v2h-2zM66 66h2v2h-2zM80 66h2v2h-2zM82 66h2v2h-2zM18 68h2v2h-2zM22 68h2v2h-2zM48 68h2v2h-2zM72 68h2v2h-2zM0 70h2v2h-2zM16 70h2v2h-2zM18 70h2v2h-2zM24 70h2v2h-2zM38 70h2v2h-2zM58 70h2v2h-2zM66 70h2v2h-2zM68 70h2v2h-2zM76 70h2v2h-2zM14 72h2v2h-2zM52 72h2v2h-2zM56 72h2v2h-2zM72 72h2v2h-2zM74 72h2v2h-2zM76 72h2v2h-2zM4 74h2v2h-2zM12 74h2v2h-2zM24 74h2v2h-2zM76 74h2v2h-2zM82 74h2v2h-2zM24 76h2v2h-2zM28 76h2v2h-2zM40 76h2v2h-2zM42 76h2v2h-2zM46 76h2v2h-2zM82 76h2v2h-2zM30 78h2v2h-2zM42 78h2v2h-2zM46 78h2v2h-2zM62 78h2v2h-2zM64 78h2v2h-2zM2 80h2v2h-2zM10 80h2v2h-2zM12 80h2v2h-2zM14 80h2v2h-2zM34 80h2v2h-2zM60 80h2v2h-2zM2 82h2v2h-2zM8 82h2v2h-2zM50 82h2v2h-2zM26 84h2v2h-2zM58 84h2v2h-2zM92 84h2v2h-2zM12 86h2v2h-2zM14 86h2v2h-2zM18 86h2v2h-2zM22 86h2v2h-2zM42 86h2v2h-2zM48 86h2v2h-2zM70 86h2v2h-2zM92 86h2v2h-2zM24 88h2v2h-2zM58 88h2v2h-2zM64 88h2v2h-2zM48 90h2v2h-2zM88 90h2v2h-2zM8 92h2v2h-2zM40 92h2v2h-2zM72 92h2v2h-2zM74 92h2v2h-2zM30 94h2v2h-2zM40 94h2v2h-2zM56 94h2v2h-2zM62 94h2v2h-2zM14 96h2v2h-2zM24 96h2v2h-2zM66 96h2v2h-2zM76 96h2v2h-2zM82 96h2v2h-2zM86 96h2v2h-2zM22 98h2v2h-2zM24 98h2v2h-2zM60 98h2v2h-2zM72 98h2v2h-2zM88 98h2v2h-2zM2 100h2v2h-2zM4 100h2v2h-2zM8 100h2v2h-2zM50 100h2v2h-2zM76 100h2v2h-2zM38 102h2v2h-2zM74 102h2v2h-2zM88 102h2v2h-2zM16 104h2v2h-2zM24 104h2v2h-2zM26 104h2v2h-2zM72 104h2v2h-2zM86 104h2v2h-2zM2 106h2v2h-2zM14 106h2v2h-2zM34 106h2v2h-2zM52 106h2v2h-2zM66 106h2v2h-2zM68 106h2v2h-2zM2 108h2v2h-2zM16 108h2v2h-2zM22 108h2v2h-2zM42 108h2v2h-2zM70 108h2v2h-2zM82 108h2v2h-2zM18 110h2v2h-2zM50 110h2v2h-2zM58 110h2v2h-2zM76 110h2v2h-2zM86 110h2v2h-2zM6 112h2v2h-2zM8 112h2v2h-2zM12 112h2v2h-2zM28 112h2v2h-2zM64 112h2v2h-2zM78 112h2v2h-2zM40 114h2v2h-2zM74 114h2v2h-2zM6 116h2v2h-2zM34 116h2v2h-2zM36 116h2v2h-2zM42 116h2v2h-2zM52 116h2v2h-2zM70 116h2v2h-2zM72 116h2v2h-2zM0 118h2v2h-2zM38 118h2v2h-2zM52 118h2v2h-2zM66 118h2v2h-2zM0 120h2v2h-2zM6 120h2v2h-2zM16 120h2v2h-2zM32 120h2v2h-2zM40 120h2v2h-2zM76 120h2v2h-2zM88 120h2v2h-2z"/><path fill="#3d739a" d="M26 0h2v2h-2zM44 0h2v2h-2zM4 4h2v2h-2zM12 4h2v2h-2zM14 4h2v2h-2zM74 4h2v2h-2zM90 4h2v2h-2zM70 6h2v2h-2zM8 8h2v2h-2zM26 8h2v2h-2zM70 8h2v2h-2zM82 8h2v2h-2zM84 8h2v2h-2zM92 8h2v2h-2zM4 10h2v2h-2zM26 10h2v2h-2zM36 10h2v2h-2zM86 10h2v2h-2zM16 12h2v2h-2zM30 12h2v2h-2zM4 14h2v2h-2zM84 14h2v2h-2zM8 16h2v2h-2zM18 16h2v2h-2zM14 18h2v2h-2zM26 18h2v2h-2zM80 18h2v2h-2zM84 18h2v2h-2zM14 20h2v2h-2zM26 20h2v2h-2zM34 20h2v2h-2zM62 20h2v2h-2zM74 20h2v2h-2zM82 20h2v2h-2zM2 22h2v2h-2zM6 22h2v2h-2zM50 22h2v2h-2zM74 22h2v2h-2zM18 24h2v2h-2zM28 24h2v2h-2zM44 24h2v2h-2zM72 24h2v2h-2zM82 24h2v2h-2zM90 24h2v2h-2zM46 26h2v2h-2zM52 28h2v2h-2zM54 28h2v2h-2zM28 30h2v2h-2zM64 30h2v2h-2zM72 30h2v2h-2zM74 30h2v2h-2zM22 32h2v2h-2zM20 34h2v2h-2zM26 34h2v2h-2zM38 34h2v2h-2zM54 34h2v2h-2zM56 34h2v2h-2zM80 34h2v2h-2zM12 36h2v2h-2zM36 36h2v2h-2zM38 36h2v2h-2zM54 36h2v2h-2zM2 38h2v2h-2zM14 38h2v2h-2zM42 38h2v2h-2zM84 38h2v2h-2zM90 38h2v2h-2zM8 40h2v2h-2zM92 40h2v2h-2zM42 42h2v2h-2zM66 42h2v2h-2zM88 42h2v2h-2zM4 46h2v2h-2zM22 48h2v2h-2zM44 48h2v2h-2zM46 48h2v2h-2zM78 48h2v2h-2zM88 48h2v2h-2zM44 50h2v2h-2zM58 50h2v2h-2zM92 50h2v2h-2zM2 52h2v2h-2zM56 52h2v2h-2zM88 54h2v2h-2zM36 58h2v2h-2zM12 60h2v2h-2zM28 60h2v2h-2zM50 60h2v2h-2zM40 62h2v2h-2zM58 62h2v2h-2zM76 62h2v2h-2zM86 62h2v2h-2zM8 64h2v2h-2zM30 64h2v2h-2zM84 64h2v2h-2zM40 66h2v2h-2zM62 66h2v2h-2zM76 66h2v2h-2zM88 68h2v2h-2zM14 70h2v2h-2zM44 70h2v2h-2zM50 70h2v2h-2zM54 70h2v2h-2zM34 72h2v2h-2zM66 72h2v2h-2zM20 76h2v2h-2zM26 76h2v2h-2zM38 76h2v2h-2zM66 76h2v2h-2zM44 78h2v2h-2zM54 78h2v2h-2zM18 80h2v2h-2zM54 80h2v2h-2zM74 80h2v2h-2zM76 80h2v2h-2zM0 82h2v2h-2zM32 82h2v2h-2zM60 82h2v2h-2zM18 84h2v2h-2zM38 86h2v2h-2zM72 86h2v2h-2zM18 88h2v2h-2zM70 88h2v2h-2zM6 90h2v2h-2zM8 90h2v2h-2zM26 90h2v2h-2zM58 90h2v2h-2zM70 90h2v2h-2zM16 92h2v2h-2zM22 92h2v2h-2zM76 92h2v2h-2zM6 94h2v2h-2zM36 94h2v2h-2zM46 94h2v2h-2zM50 94h2v2h-2zM64 94h2v2h-2zM84 96h2v2h-2zM4 98h2v2h-2zM14 98h2v2h-2zM16 98h2v2h-2zM38 98h2v2h-2zM54 100h2v2h-2zM0 104h2v2h-2zM18 104h2v2h-2zM38 104h2v2h-2zM76 104h2v2h-2zM92 104h2v2h-2zM70 106h2v2h-2zM76 106h2v2h-2zM56 108h2v2h-2zM66 108h2v2h-2zM2 110h2v2h-2zM32 112h2v2h-2zM56 112h2v2h-2zM60 112h2v2h-2zM70 112h2v2h-2zM28 114h2v2h-2zM66 114h2v2h-2zM90 114h2v2h-2zM40 116h2v2h-2zM46 116h2v2h-2zM68 116h2v2h-2zM48 118h2v2h-2zM58 118h2v2h-2zM92 118h2v2h-2zM8 120h2v2h-2zM30 120h2v2h-2z"/><path fill="#54578a" d="M38 0h2v2h-2zM40 0h2v2h-2zM54 0h2v2h-2zM80 0h2v2h-2zM88 0h2v2h-2zM2 2h2v2h-2zM4 2h2v2h-2zM18 2h2v2h-2zM22 2h2v2h-2zM58 2h2v2h-2zM62 2h2v2h-2zM64 4h2v2h-2zM92 4h2v2h-2zM32 6h2v2h-2zM62 6h2v2h-2zM72 6h2v2h-2zM14 8h2v2h-2zM34 8h2v2h-2zM40 8h2v2h-2zM50 8h2v2h-2zM52 8h2v2h-2zM58 8h2v2h-2zM68 8h2v2h-2zM78 8h2v2h-2zM10 10h2v2h-2zM12 10h2v2h-2zM82 12h2v2h-2zM86 12h2v2h-2zM20 14h2v2h-2zM58 14h2v2h-2zM88 14h2v2h-2zM0 16h2v2h-2zM2 16h2v2h-2zM56 16h2v2h-2zM74 16h2v2h-2zM92 16h2v2h-2zM16 18h2v2h-2zM18 18h2v2h-2zM30 18h2v2h-2zM48 18h2v2h-2zM60 18h2v2h-2zM2 20h2v2h-2zM32 20h2v2h-2zM38 20h2v2h-2zM54 20h2v2h-2zM88 20h2v2h-2zM22 22h2v2h-2zM28 22h2v2h-2zM64 22h2v2h-2zM80 22h2v2h-2zM78 24h2v2h-2zM80 24h2v2h-2zM2 26h2v2h-2zM50 26h2v2h-2zM54 26h2v2h-2zM64 26h2v2h-2zM70 26h2v2h-2zM80 26h2v2h-2zM92 26h2v2h-2zM10 28h2v2h-2zM28 28h2v2h-2zM38 28h2v2h-2zM66 28h2v2h-2zM72 28h2v2h-2zM18 30h2v2h-2zM36 30h2v2h-2zM58 30h2v2h-2zM78 30h2v2h-2zM2 32h2v2h-2zM14 32h2v2h-2zM28 32h2v2h-2zM60 32h2v2h-2zM6 34h2v2h-2zM58 34h2v2h-2zM62 34h2v2h-2zM66 34h2v2h-2zM82 34h2v2h-2zM88 34h2v2h-2zM0 36h2v2h-2zM42 36h2v2h-2zM44 36h2v2h-2zM62 36h2v2h-2zM16 38h2v2h-2zM54 38h2v2h-2zM72 38h2v2h-2zM62 40h2v2h-2zM70 40h2v2h-2zM12 42h2v2h-2zM36 42h2v2h-2zM38 42h2v2h-2zM58 42h2v2h-2zM60 42h2v2h-2zM16 44h2v2h-2zM44 44h2v2h-2zM52 44h2v2h-2zM74 44h2v2h-2zM84 44h2v2h-2zM92 44h2v2h-2zM0 46h2v2h-2zM28 46h2v2h-2zM32 46h2v2h-2zM54 46h2v2h-2zM66 46h2v2h-2zM74 46h2v2h-2zM78 46h2v2h-2zM86 46h2v2h-2zM92 46h2v2h-2zM10 48h2v2h-2zM28 48h2v2h-2zM40 48h2v2h-2zM52 48h2v2h-2zM54 48h2v2h-2zM50 50h2v2h-2zM52 50h2v2h-2zM64 50h2v2h-2zM66 50h2v2h-2zM70 50h2v2h-2zM22 52h2v2h-2zM88 52h2v2h-2zM2 56h2v2h-2zM48 56h2v2h-2zM68 56h2v2h-2zM88 56h2v2h-2zM66 58h2v2h-2zM68 58h2v2h-2zM90 58h2v2h-2zM14 60h2v2h-2zM54 60h2v2h-2zM62 60h2v2h-2zM64 60h2v2h-2zM70 60h2v2h-2zM78 60h2v2h-2zM20 62h2v2h-2zM24 62h2v2h-2zM64 62h2v2h-2zM70 62h2v2h-2zM4 64h2v2h-2zM24 64h2v2h-2zM44 64h2v2h-2zM76 64h2v2h-2zM80 64h2v2h-2zM14 66h2v2h-2zM26 66h2v2h-2zM84 66h2v2h-2zM54 68h2v2h-2zM60 68h2v2h-2zM86 68h2v2h-2zM6 70h2v2h-2zM10 70h2v2h-2zM32 70h2v2h-2zM52 70h2v2h-2zM80 70h2v2h-2zM0 72h2v2h-2zM18 72h2v2h-2zM20 72h2v2h-2zM48 72h2v2h-2zM62 72h2v2h-2zM34 74h2v2h-2zM38 74h2v2h-2zM68 74h2v2h-2zM0 76h2v2h-2zM18 76h2v2h-2zM48 76h2v2h-2zM54 76h2v2h-2zM70 76h2v2h-2zM74 76h2v2h-2zM90 76h2v2h-2zM26 78h2v2h-2zM40 78h2v2h-2zM70 78h2v2h-2zM92 78h2v2h-2zM44 80h2v2h-2zM80 80h2v2h-2zM4 82h2v2h-2zM28 82h2v2h-2zM34 82h2v2h-2zM52 82h2v2h-2zM76 82h2v2h-2zM0 84h2v2h-2zM30 84h2v2h-2zM36 84h2v2h-2zM40 84h2v2h-2zM42 84h2v2h-2zM78 84h2v2h-2zM88 84h2v2h-2zM24 86h2v2h-2zM36 86h2v2h-2zM58 86h2v2h-2zM76 86h2v2h-2zM78 86h2v2h-2zM84 86h2v2h-2zM90 86h2v2h-2zM10 88h2v2h-2zM34 88h2v2h-2zM60 88h2v2h-2zM92 88h2v2h-2zM18 90h2v2h-2zM20 90h2v2h-2zM34 90h2v2h-2zM40 90h2v2h-2zM44 90h2v2h-2zM64 90h2v2h-2zM72 90h2v2h-2zM2 92h2v2h-2zM46 92h2v2h-2zM60 92h2v2h-2zM78 92h2v2h-2zM32 94h2v2h-2zM66 94h2v2h-2zM72 94h2v2h-2zM74 94h2v2h-2zM90 94h2v2h-2zM44 96h2v2h-2zM78 96h2v2h-2zM0 98h2v2h-2zM80 98h2v2h-2zM22 100h2v2h-2zM26 100h2v2h-2zM38 100h2v2h-2zM46 100h2v2h-2zM48 102h2v2h-2zM54 102h2v2h-2zM66 102h2v2h-2zM78 102h2v2h-2zM84 102h2v2h-2zM20 104h2v2h-2zM60 104h2v2h-2zM80 104h2v2h-2zM12 106h2v2h-2zM44 106h2v2h-2zM84 106h2v2h-2zM32 108h2v2h-2zM34 108h2v2h-2zM54 108h2v2h-2zM60 108h2v2h-2zM46 110h2v2h-2zM48 110h2v2h-2zM72 110h2v2h-2zM80 110h2v2h-2zM90 110h2v2h-2zM36 112h2v2h-2zM80 112h2v2h-2zM4 114h2v2h-2zM16 114h2v2h-2zM18 114h2v2h-2zM56 114h2v2h-2zM68 114h2v2h-2zM10 116h2v2h-2zM18 116h2v2h-2zM28 116h2v2h-2zM76 116h2v2h-2zM82 116h2v2h-2zM88 116h2v2h-2zM4 118h2v2h-2zM30 118h2v2h-2zM88 118h2v2h-2zM10 120h2v2h-2zM12 120h2v2h-2zM72 120h2v2h-2z"/><path fill="#aa5870" d="M46 0h2v2h-2zM74 0h2v2h-2zM8 2h2v2h-2zM20 2h2v2h-2zM32 2h2v2h-2zM10 6h2v2h-2zM28 10h2v2h-2zM46 10h2v2h-2zM68 12h2v2h-2zM70 12h2v2h-2zM46 14h2v2h-2zM54 16h2v2h-2zM66 18h2v2h-2zM12 22h2v2h-2zM16 22h2v2h-2zM82 22h2v2h-2zM88 24h2v2h-2zM34 28h2v2h-2zM24 30h2v2h-2zM56 30h2v2h-2zM70 30h2v2h-2zM22 34h2v2h-2zM42 34h2v2h-2zM72 34h2v2h-2zM76 34h2v2h-2zM78 34h2v2h-2zM32 40h2v2h-2zM10 44h2v2h-2zM14 44h2v2h-2zM40 46h2v2h-2zM82 48h2v2h-2zM4 52h2v2h-2zM32 54h2v2h-2zM54 56h2v2h-2zM66 56h2v2h-2zM22 58h2v2h-2zM56 58h2v2h-2zM16 62h2v2h-2zM18 62h2v2h-2zM44 66h2v2h-2zM2 68h2v2h-2zM34 68h2v2h-2zM30 70h2v2h-2zM42 72h2v2h-2zM18 74h2v2h-2zM52 76h2v2h-2zM10 78h2v2h-2zM12 78h2v2h-2zM58 78h2v2h-2zM62 80h2v2h-2zM12 84h2v2h-2zM44 84h2v2h-2zM86 84h2v2h-2zM8 86h2v2h-2zM28 88h2v2h-2zM50 88h2v2h-2zM78 90h2v2h-2zM24 92h2v2h-2zM26 92h2v2h-2zM42 92h2v2h-2zM4 96h2v2h-2zM6 98h2v2h-2zM64 98h2v2h-2zM86 98h2v2h-2zM16 100h2v2h-2zM66 100h2v2h-2zM78 100h2v2h-2zM8 102h2v2h-2zM34 102h2v2h-2zM14 104h2v2h-2zM36 104h2v2h-2zM48 104h2v2h-2zM50 106h2v2h-2zM58 106h2v2h-2zM74 106h2v2h-2zM10 108h2v2h-2zM46 108h2v2h-2zM64 108h2v2h-2zM78 108h2v2h-2zM88 108h2v2h-2zM6 110h2v2h-2zM26 110h2v2h-2zM56 110h2v2h-2zM84 112h2v2h-2zM92 114h2v2h-2z"/><path fill="#d8cc9c" d="M50 0h2v2h-2zM78 0h2v2h-2zM48 2h2v2h-2zM32 4h2v2h-2zM44 4h2v2h-2zM86 6h2v2h-2zM6 10h2v2h-2zM14 10h2v2h-2zM22 16h2v2h-2zM46 16h2v2h-2zM22 18h2v2h-2zM46 18h2v2h-2zM72 18h2v2h-2zM88 18h2v2h-2zM90 18h2v2h-2zM58 20h2v2h-2zM26 24h2v2h-2zM30 24h2v2h-2zM42 26h2v2h-2zM14 28h2v2h-2zM32 28h2v2h-2zM32 30h2v2h-2zM68 30h2v2h-2zM90 30h2v2h-2zM34 32h2v2h-2zM56 32h2v2h-2zM58 32h2v2h-2zM2 34h2v2h-2zM74 34h2v2h-2zM82 36h2v2h-2zM10 40h2v2h-2zM46 40h2v2h-2zM6 42h2v2h-2zM54 42h2v2h-2zM26 44h2v2h-2zM80 44h2v2h-2zM86 48h2v2h-2zM46 50h2v2h-2zM60 50h2v2h-2zM68 50h2v2h-2zM16 52h2v2h-2zM36 52h2v2h-2zM52 52h2v2h-2zM64 52h2v2h-2zM14 56h2v2h-2zM20 56h2v2h-2zM22 56h2v2h-2zM44 56h2v2h-2zM32 60h2v2h-2zM54 62h2v2h-2zM60 62h2v2h-2zM78 62h2v2h-2zM22 64h2v2h-2zM0 66h2v2h-2zM42 66h2v2h-2zM86 66h2v2h-2zM46 68h2v2h-2zM78 68h2v2h-2zM22 70h2v2h-2zM24 72h2v2h-2zM60 72h2v2h-2zM16 74h2v2h-2zM60 74h2v2h-2zM62 74h2v2h-2zM92 74h2v2h-2zM88 76h2v2h-2zM46 80h2v2h-2zM78 80h2v2h-2zM22 82h2v2h-2zM64 84h2v2h-2zM74 86h2v2h-2zM6 88h2v2h-2zM36 88h2v2h-2zM10 90h2v2h-2zM86 94h2v2h-2zM92 94h2v2h-2zM0 100h2v2h-2zM18 100h2v2h-2zM20 100h2v2h-2zM30 100h2v2h-2zM40 100h2v2h-2zM62 104h2v2h-2zM26 108h2v2h-2zM40 110h2v2h-2zM52 112h2v2h-2zM6 114h2v2h-2zM8 114h2v2h-2zM46 114h2v2h-2zM72 114h2v2h-2zM84 114h2v2h-2zM40 118h2v2h-2zM82 118h2v2h-2zM48 120h2v2h-2z"/><path fill="#b0a2b2" d="M56 0h2v2h-2zM74 2h2v2h-2zM76 2h2v2h-2zM80 2h2v2h-2zM46 4h2v2h-2zM0 6h2v2h-2zM80 6h2v2h-2zM0 8h2v2h-2zM38 8h2v2h-2zM64 10h2v2h-2zM10 12h2v2h-2zM28 14h2v2h-2zM60 14h2v2h-2zM30 16h2v2h-2zM84 16h2v2h-2zM6 18h2v2h-2zM20 18h2v2h-2zM24 18h2v2h-2zM32 18h2v2h-2zM52 18h2v2h-2zM70 18h2v2h-2zM4 20h2v2h-2zM6 20h2v2h-2zM4 22h2v2h-2zM14 22h2v2h-2zM62 22h2v2h-2zM6 24h2v2h-2zM8 24h2v2h-2zM64 24h2v2h-2zM6 26h2v2h-2zM24 28h2v2h-2zM26 28h2v2h-2zM50 28h2v2h-2zM74 28h2v2h-2zM48 30h2v2h-2zM62 30h2v2h-2zM86 32h2v2h-2zM88 32h2v2h-2zM72 36h2v2h-2zM32 38h2v2h-2zM68 38h2v2h-2zM72 40h2v2h-2zM2 42h2v2h-2zM78 42h2v2h-2zM46 44h2v2h-2zM68 46h2v2h-2zM84 46h2v2h-2zM24 48h2v2h-2zM48 48h2v2h-2zM74 48h2v2h-2zM26 52h2v2h-2zM28 52h2v2h-2zM72 52h2v2h-2zM2 54h2v2h-2zM30 54h2v2h-2zM80 54h2v2h-2zM12 58h2v2h-2zM14 58h2v2h-2zM40 58h2v2h-2zM54 58h2v2h-2zM72 58h2v2h-2zM76 58h2v2h-2zM78 58h2v2h-2zM88 58h2v2h-2zM80 60h2v2h-2zM12 62h2v2h-2zM66 62h2v2h-2zM42 64h2v2h-2zM70 66h2v2h-2zM4 68h2v2h-2zM16 68h2v2h-2zM48 70h2v2h-2zM38 72h2v2h-2zM46 72h2v2h-2zM46 74h2v2h-2zM54 74h2v2h-2zM58 74h2v2h-2zM70 74h2v2h-2zM30 76h2v2h-2zM32 76h2v2h-2zM36 76h2v2h-2zM8 78h2v2h-2zM24 78h2v2h-2zM28 78h2v2h-2zM66 78h2v2h-2zM84 78h2v2h-2zM8 80h2v2h-2zM44 82h2v2h-2zM58 82h2v2h-2zM54 84h2v2h-2zM50 86h2v2h-2zM82 88h2v2h-2zM16 90h2v2h-2zM22 90h2v2h-2zM76 90h2v2h-2zM12 92h2v2h-2zM14 92h2v2h-2zM32 92h2v2h-2zM36 92h2v2h-2zM2 94h2v2h-2zM34 94h2v2h-2zM22 96h2v2h-2zM36 96h2v2h-2zM50 96h2v2h-2zM46 98h2v2h-2zM26 102h2v2h-2zM58 102h2v2h-2zM30 104h2v2h-2zM44 104h2v2h-2zM54 104h2v2h-2zM8 106h2v2h-2zM0 108h2v2h-2zM18 108h2v2h-2zM84 108h2v2h-2zM24 110h2v2h-2zM68 110h2v2h-2zM70 110h2v2h-2zM88 110h2v2h-2zM92 110h2v2h-2zM48 112h2v2h-2zM0 116h2v2h-2zM12 118h2v2h-2zM86 118h2v2h-2zM42 120h2v2h-2zM66 120h2v2h-2zM78 120h2v2h-2zM80 120h2v2h-2zM90 120h2v2h-2z"/><path fill="#725f92" d="M64 0h2v2h-2zM70 0h2v2h-2zM12 2h2v2h-2zM16 2h2v2h-2zM28 2h2v2h-2zM38 2h2v2h-2zM40 2h2v2h-2zM44 2h2v2h-2zM10 4h2v2h-2zM18 4h2v2h-2zM58 4h2v2h-2zM62 4h2v2h-2zM20 6h2v2h-2zM54 6h2v2h-2zM32 8h2v2h-2zM20 10h2v2h-2zM32 10h2v2h-2zM8 12h2v2h-2zM66 12h2v2h-2zM88 12h2v2h-2zM56 14h2v2h-2zM68 14h2v2h-2zM70 14h2v2h-2zM76 14h2v2h-2zM86 14h2v2h-2zM6 16h2v2h-2zM10 16h2v2h-2zM32 16h2v2h-2zM28 18h2v2h-2zM78 18h2v2h-2zM88 22h2v2h-2zM38 24h2v2h-2zM18 26h2v2h-2zM56 26h2v2h-2zM82 26h2v2h-2zM86 26h2v2h-2zM4 28h2v2h-2zM92 28h2v2h-2zM34 30h2v2h-2zM10 32h2v2h-2zM26 32h2v2h-2zM90 32h2v2h-2zM0 34h2v2h-2zM12 34h2v2h-2zM14 34h2v2h-2zM16 34h2v2h-2zM60 34h2v2h-2zM66 36h2v2h-2zM74 36h2v2h-2zM0 38h2v2h-2zM22 38h2v2h-2zM26 38h2v2h-2zM36 40h2v2h-2zM38 40h2v2h-2zM48 40h2v2h-2zM52 40h2v2h-2zM80 40h2v2h-2zM32 42h2v2h-2zM4 44h2v2h-2zM48 46h2v2h-2zM58 46h2v2h-2zM20 48h2v2h-2zM66 48h2v2h-2zM90 48h2v2h-2zM92 48h2v2h-2zM4 50h2v2h-2zM82 50h2v2h-2zM14 52h2v2h-2zM32 52h2v2h-2zM12 54h2v2h-2zM86 54h2v2h-2zM24 56h2v2h-2zM34 56h2v2h-2zM70 56h2v2h-2zM4 58h2v2h-2zM6 58h2v2h-2zM32 58h2v2h-2zM60 58h2v2h-2zM80 58h2v2h-2zM84 58h2v2h-2zM24 60h2v2h-2zM38 60h2v2h-2zM58 60h2v2h-2zM2 62h2v2h-2zM30 62h2v2h-2zM32 62h2v2h-2zM38 62h2v2h-2zM16 64h2v2h-2zM62 64h2v2h-2zM88 64h2v2h-2zM52 66h2v2h-2zM54 66h2v2h-2zM20 68h2v2h-2zM66 68h2v2h-2zM76 68h2v2h-2zM82 68h2v2h-2zM34 70h2v2h-2zM70 70h2v2h-2zM92 70h2v2h-2zM80 72h2v2h-2zM84 72h2v2h-2zM86 74h2v2h-2zM34 76h2v2h-2zM22 78h2v2h-2zM86 78h2v2h-2zM84 80h2v2h-2zM92 80h2v2h-2zM24 82h2v2h-2zM26 82h2v2h-2zM68 82h2v2h-2zM2 84h2v2h-2zM56 84h2v2h-2zM66 84h2v2h-2zM20 86h2v2h-2zM44 86h2v2h-2zM26 88h2v2h-2zM42 88h2v2h-2zM46 88h2v2h-2zM24 90h2v2h-2zM38 90h2v2h-2zM4 92h2v2h-2zM66 92h2v2h-2zM58 94h2v2h-2zM70 94h2v2h-2zM6 96h2v2h-2zM16 96h2v2h-2zM40 96h2v2h-2zM88 96h2v2h-2zM92 96h2v2h-2zM2 98h2v2h-2zM58 98h2v2h-2zM70 98h2v2h-2zM78 98h2v2h-2zM90 98h2v2h-2zM92 98h2v2h-2zM12 100h2v2h-2zM34 100h2v2h-2zM36 100h2v2h-2zM60 100h2v2h-2zM80 100h2v2h-2zM20 102h2v2h-2zM22 102h2v2h-2zM40 102h2v2h-2zM72 102h2v2h-2zM74 104h2v2h-2zM0 106h2v2h-2zM22 106h2v2h-2zM78 106h2v2h-2zM48 108h2v2h-2zM86 108h2v2h-2zM34 110h2v2h-2zM74 110h2v2h-2zM26 112h2v2h-2zM66 112h2v2h-2zM34 114h2v2h-2zM36 114h2v2h-2zM52 114h2v2h-2zM76 114h2v2h-2zM80 114h2v2h-2zM38 116h2v2h-2zM50 116h2v2h-2zM56 116h2v2h-2zM64 116h2v2h-2zM80 116h2v2h-2zM42 118h2v2h-2zM62 118h2v2h-2zM80 118h2v2h-2zM58 120h2v2h-2zM82 120h2v2h-2zM84 120h2v2h-2z"/><path fill="#4f8070" d="M66 0h2v2h-2zM0 2h2v2h-2zM56 2h2v2h-2zM40 4h2v2h-2zM52 4h2v2h-2zM16 6h2v2h-2zM12 8h2v2h-2zM48 8h2v2h-2zM54 8h2v2h-2zM64 8h2v2h-2zM58 12h2v2h-2zM74 12h2v2h-2zM18 14h2v2h-2zM36 14h2v2h-2zM62 14h2v2h-2zM16 16h2v2h-2zM52 16h2v2h-2zM0 18h2v2h-2zM2 18h2v2h-2zM74 18h2v2h-2zM76 18h2v2h-2zM18 20h2v2h-2zM44 20h2v2h-2zM92 22h2v2h-2zM4 24h2v2h-2zM62 24h2v2h-2zM4 26h2v2h-2zM38 26h2v2h-2zM78 26h2v2h-2zM88 26h2v2h-2zM42 28h2v2h-2zM4 32h2v2h-2zM76 32h2v2h-2zM36 34h2v2h-2zM50 34h2v2h-2zM34 38h2v2h-2zM46 38h2v2h-2zM52 38h2v2h-2zM22 40h2v2h-2zM24 40h2v2h-2zM86 40h2v2h-2zM0 42h2v2h-2zM26 42h2v2h-2zM76 42h2v2h-2zM20 44h2v2h-2zM50 44h2v2h-2zM70 44h2v2h-2zM38 46h2v2h-2zM52 46h2v2h-2zM0 48h2v2h-2zM4 48h2v2h-2zM8 48h2v2h-2zM16 48h2v2h-2zM26 48h2v2h-2zM30 48h2v2h-2zM60 48h2v2h-2zM66 52h2v2h-2zM92 52h2v2h-2zM38 54h2v2h-2zM12 56h2v2h-2zM0 58h2v2h-2zM28 58h2v2h-2zM30 58h2v2h-2zM34 58h2v2h-2zM48 58h2v2h-2zM62 58h2v2h-2zM82 58h2v2h-2zM84 60h2v2h-2zM48 64h2v2h-2zM58 64h2v2h-2zM64 64h2v2h-2zM86 64h2v2h-2zM10 66h2v2h-2zM58 66h2v2h-2zM0 68h2v2h-2zM24 68h2v2h-2zM30 68h2v2h-2zM40 68h2v2h-2zM68 68h2v2h-2zM80 68h2v2h-2zM28 70h2v2h-2zM74 70h2v2h-2zM40 72h2v2h-2zM82 72h2v2h-2zM30 74h2v2h-2zM32 74h2v2h-2zM80 74h2v2h-2zM16 76h2v2h-2zM14 78h2v2h-2zM68 78h2v2h-2zM72 78h2v2h-2zM80 78h2v2h-2zM12 82h2v2h-2zM14 82h2v2h-2zM40 82h2v2h-2zM54 82h2v2h-2zM78 82h2v2h-2zM6 84h2v2h-2zM80 84h2v2h-2zM6 86h2v2h-2zM10 86h2v2h-2zM34 86h2v2h-2zM40 86h2v2h-2zM46 86h2v2h-2zM8 88h2v2h-2zM22 88h2v2h-2zM74 88h2v2h-2zM36 90h2v2h-2zM52 90h2v2h-2zM50 92h2v2h-2zM54 92h2v2h-2zM84 92h2v2h-2zM90 92h2v2h-2zM0 96h2v2h-2zM34 96h2v2h-2zM58 96h2v2h-2zM80 96h2v2h-2zM8 98h2v2h-2zM66 98h2v2h-2zM6 100h2v2h-2zM44 100h2v2h-2zM48 100h2v2h-2zM84 100h2v2h-2zM90 100h2v2h-2zM16 102h2v2h-2zM60 102h2v2h-2zM82 102h2v2h-2zM46 104h2v2h-2zM58 104h2v2h-2zM64 104h2v2h-2zM68 104h2v2h-2zM20 106h2v2h-2zM80 106h2v2h-2zM86 106h2v2h-2zM92 106h2v2h-2zM30 108h2v2h-2zM40 108h2v2h-2zM74 108h2v2h-2zM28 110h2v2h-2zM30 110h2v2h-2zM44 110h2v2h-2zM52 110h2v2h-2zM66 110h2v2h-2zM78 110h2v2h-2zM22 112h2v2h-2zM30 112h2v2h-2zM82 112h2v2h-2zM12 114h2v2h-2zM38 114h2v2h-2zM58 114h2v2h-2zM28 118h2v2h-2zM70 120h2v2h-2z"/><path fill="#b55a48" d="M24 2h2v2h-2zM26 2h2v2h-2zM50 2h2v2h-2zM70 2h2v2h-2zM90 2h2v2h-2zM2 4h2v2h-2zM8 4h2v2h-2zM12 6h2v2h-2zM46 6h2v2h-2zM50 6h2v2h-2zM52 6h2v2h-2zM68 6h2v2h-2zM66 8h2v2h-2zM90 8h2v2h-2zM2 10h2v2h-2zM72 10h2v2h-2zM2 12h2v2h-2zM24 12h2v2h-2zM32 12h2v2h-2zM6 14h2v2h-2zM38 14h2v2h-2zM4 16h2v2h-2zM72 16h2v2h-2zM76 16h2v2h-2zM86 16h2v2h-2zM50 18h2v2h-2zM62 18h2v2h-2zM82 18h2v2h-2zM12 20h2v2h-2zM22 20h2v2h-2zM24 20h2v2h-2zM30 20h2v2h-2zM48 20h2v2h-2zM92 20h2v2h-2zM0 22h2v2h-2zM30 22h2v2h-2zM32 22h2v2h-2zM42 22h2v2h-2zM42 24h2v2h-2zM52 24h2v2h-2zM66 24h2v2h-2zM76 24h2v2h-2zM72 26h2v2h-2zM46 28h2v2h-2zM70 28h2v2h-2zM82 28h2v2h-2zM14 30h2v2h-2zM76 30h2v2h-2zM42 32h2v2h-2zM70 32h2v2h-2zM40 34h2v2h-2zM52 34h2v2h-2zM4 36h2v2h-2zM26 36h2v2h-2zM50 36h2v2h-2zM52 36h2v2h-2zM92 36h2v2h-2zM6 38h2v2h-2zM26 40h2v2h-2zM58 40h2v2h-2zM22 42h2v2h-2zM40 42h2v2h-2zM56 42h2v2h-2zM8 44h2v2h-2zM24 44h2v2h-2zM38 44h2v2h-2zM86 44h2v2h-2zM90 44h2v2h-2zM8 46h2v2h-2zM10 46h2v2h-2zM14 48h2v2h-2zM6 50h2v2h-2zM76 50h2v2h-2zM90 50h2v2h-2zM40 52h2v2h-2zM48 52h2v2h-2zM14 54h2v2h-2zM16 54h2v2h-2zM40 54h2v2h-2zM64 54h2v2h-2zM42 56h2v2h-2zM46 56h2v2h-2zM72 56h2v2h-2zM74 56h2v2h-2zM46 58h2v2h-2zM70 58h2v2h-2zM86 58h2v2h-2zM22 60h2v2h-2zM88 60h2v2h-2zM34 62h2v2h-2zM0 64h2v2h-2zM26 64h2v2h-2zM46 64h2v2h-2zM62 68h2v2h-2zM92 68h2v2h-2zM46 70h2v2h-2zM2 72h2v2h-2zM16 72h2v2h-2zM28 72h2v2h-2zM2 74h2v2h-2zM28 74h2v2h-2zM64 74h2v2h-2zM6 76h2v2h-2zM20 80h2v2h-2zM50 80h2v2h-2zM56 80h2v2h-2zM58 80h2v2h-2zM66 80h2v2h-2zM88 80h2v2h-2zM88 82h2v2h-2zM90 82h2v2h-2zM48 84h2v2h-2zM90 84h2v2h-2zM0 86h2v2h-2zM16 86h2v2h-2zM54 86h2v2h-2zM64 86h2v2h-2zM14 88h2v2h-2zM48 88h2v2h-2zM62 88h2v2h-2zM72 88h2v2h-2zM90 88h2v2h-2zM74 90h2v2h-2zM34 92h2v2h-2zM44 92h2v2h-2zM52 92h2v2h-2zM62 92h2v2h-2zM80 92h2v2h-2zM88 92h2v2h-2zM18 94h2v2h-2zM38 96h2v2h-2zM18 98h2v2h-2zM10 100h2v2h-2zM24 102h2v2h-2zM70 102h2v2h-2zM8 104h2v2h-2zM78 104h2v2h-2zM10 106h2v2h-2zM18 106h2v2h-2zM24 106h2v2h-2zM36 106h2v2h-2zM82 106h2v2h-2zM12 108h2v2h-2zM20 108h2v2h-2zM28 108h2v2h-2zM58 108h2v2h-2zM68 108h2v2h-2zM90 108h2v2h-2zM92 108h2v2h-2zM54 110h2v2h-2zM60 110h2v2h-2zM84 110h2v2h-2zM14 112h2v2h-2zM18 112h2v2h-2zM20 112h2v2h-2zM34 112h2v2h-2zM72 112h2v2h-2zM48 114h2v2h-2zM70 114h2v2h-2zM16 116h2v2h-2zM62 116h2v2h-2zM86 116h2v2h-2zM36 118h2v2h-2zM56 118h2v2h-2zM90 118h2v2h-2zM22 120h2v2h-2zM44 120h2v2h-2zM52 120h2v2h-2zM68 120h2v2h-2zM92 120h2v2h-2z"/><path fill="#87a070" d="M30 4h2v2h-2zM62 8h2v2h-2zM76 8h2v2h-2zM12 12h2v2h-2zM2 14h2v2h-2zM50 16h2v2h-2zM92 18h2v2h-2zM86 20h2v2h-2zM20 24h2v2h-2zM34 24h2v2h-2zM0 32h2v2h-2zM78 32h2v2h-2zM40 36h2v2h-2zM76 40h2v2h-2zM58 48h2v2h-2zM38 50h2v2h-2zM26 60h2v2h-2zM52 64h2v2h-2zM92 64h2v2h-2zM2 66h2v2h-2zM66 74h2v2h-2zM10 84h2v2h-2zM50 84h2v2h-2zM82 84h2v2h-2zM66 88h2v2h-2zM60 90h2v2h-2zM82 92h2v2h-2zM76 94h2v2h-2zM52 98h2v2h-2zM54 98h2v2h-2zM28 106h2v2h-2zM20 110h2v2h-2zM50 112h2v2h-2zM62 112h2v2h-2zM74 112h2v2h-2zM10 114h2v2h-2zM30 116h2v2h-2zM60 118h2v2h-2zM64 118h2v2h-2zM60 120h2v2h-2z"/></g><rect width="94" height="121" fill="#6a6680" opacity="0.22"/>
<path d="M13 21 Q48 14 84 21 L84 80 L13 80 Z" fill="#f6eed4" stroke="#8a2430" stroke-width="1.1"/>
<text x="48.5" y="44" text-anchor="middle" font-family="Liberation Sans" font-weight="bold" font-size="13" fill="#b01a34" stroke="#b01a34" stroke-width="0.7" textLength="58" lengthAdjust="spacingAndGlyphs">KDE JSOU</text>
<text x="48.5" y="60" text-anchor="middle" font-family="Liberation Sans" font-weight="bold" font-size="13" fill="#b01a34" stroke="#b01a34" stroke-width="0.7" textLength="60" lengthAdjust="spacingAndGlyphs">SURIKATY?</text>
<g fill="#e4cc9c" stroke="#5a3c28" stroke-width="0.35">
<path d="M16 27 q-3 -6 2 -8 q5 -1 5 4 q0 4 -4 5z"/>
<path d="M37 23 q-2 -5 3 -6 q5 0 4 5 q-1 3 -4 3z"/>
<path d="M48 23 q-1 -5 4 -5 q5 1 3 6 q-2 2 -4 1z"/>
<path d="M77 33 q-3 -6 2 -8 q5 -1 5 4 q0 3 -2 5 l2 14 q-3 2 -5 0z"/>
<path d="M6 44 q-3 -6 2 -8 q4 -1 5 3 q0 3 -2 5 l1 10 q-3 2 -5 0z"/>
<path d="M14 80 q-1 -6 4 -7 q5 0 5 5 l0 2z"/>
<path d="M25 80 l1 -12 q-2 -5 2 -7 q4 -1 5 4 q0 3 -2 4 l2 11z"/>
<path d="M44 80 q-1 -6 4 -7 q5 0 5 5 l0 2z"/>
<path d="M55 80 l2 -10 q-2 -5 2 -7 q4 -1 5 4 q0 3 -2 4 l4 9z"/>
<path d="M68 80 q-1 -6 4 -7 q5 0 5 5 l0 2z"/>
</g>
<g fill="#2a1e18">
<circle cx="18" cy="23" r="0.8"/><circle cx="20.5" cy="23" r="0.8"/>
<circle cx="39.5" cy="20" r="0.8"/><circle cx="42" cy="20" r="0.8"/>
<circle cx="51" cy="20.5" r="0.8"/><circle cx="53.5" cy="20.5" r="0.8"/>
<circle cx="79" cy="29" r="0.8"/><circle cx="81.5" cy="29" r="0.8"/>
<circle cx="8" cy="40" r="0.8"/><circle cx="10.5" cy="40" r="0.8"/>
<circle cx="17" cy="76" r="0.8"/><circle cx="19.5" cy="76" r="0.8"/>
<circle cx="28" cy="64" r="0.8"/><circle cx="30.5" cy="64" r="0.8"/>
<circle cx="47" cy="76" r="0.8"/><circle cx="49.5" cy="76" r="0.8"/>
<circle cx="59" cy="66" r="0.8"/><circle cx="61.5" cy="66" r="0.8"/>
<circle cx="71" cy="76" r="0.8"/><circle cx="73.5" cy="76" r="0.8"/>
</g>
<rect x="38" y="116" width="19" height="5" fill="#fff"/>
<circle cx="40" cy="118.5" r="1" fill="#d02020"/>
<path d="M81 121 Q88 116 94 108 L94 121 Z" fill="#f0f0f4"/>
</svg>

<!-- scrollbar -->
<div class="a" style="left:602px;top:238px;width:1.5px;height:172px;background:#9a9c9e;border-radius:1px"></div>

<!-- status -->
<div class="t" style="left:18.5px;top:445px">Ready.</div>
<div class="t" style="left:538.5px;top:445px;font-size:8.65px">Total entries: 2</div>
</body></html>
